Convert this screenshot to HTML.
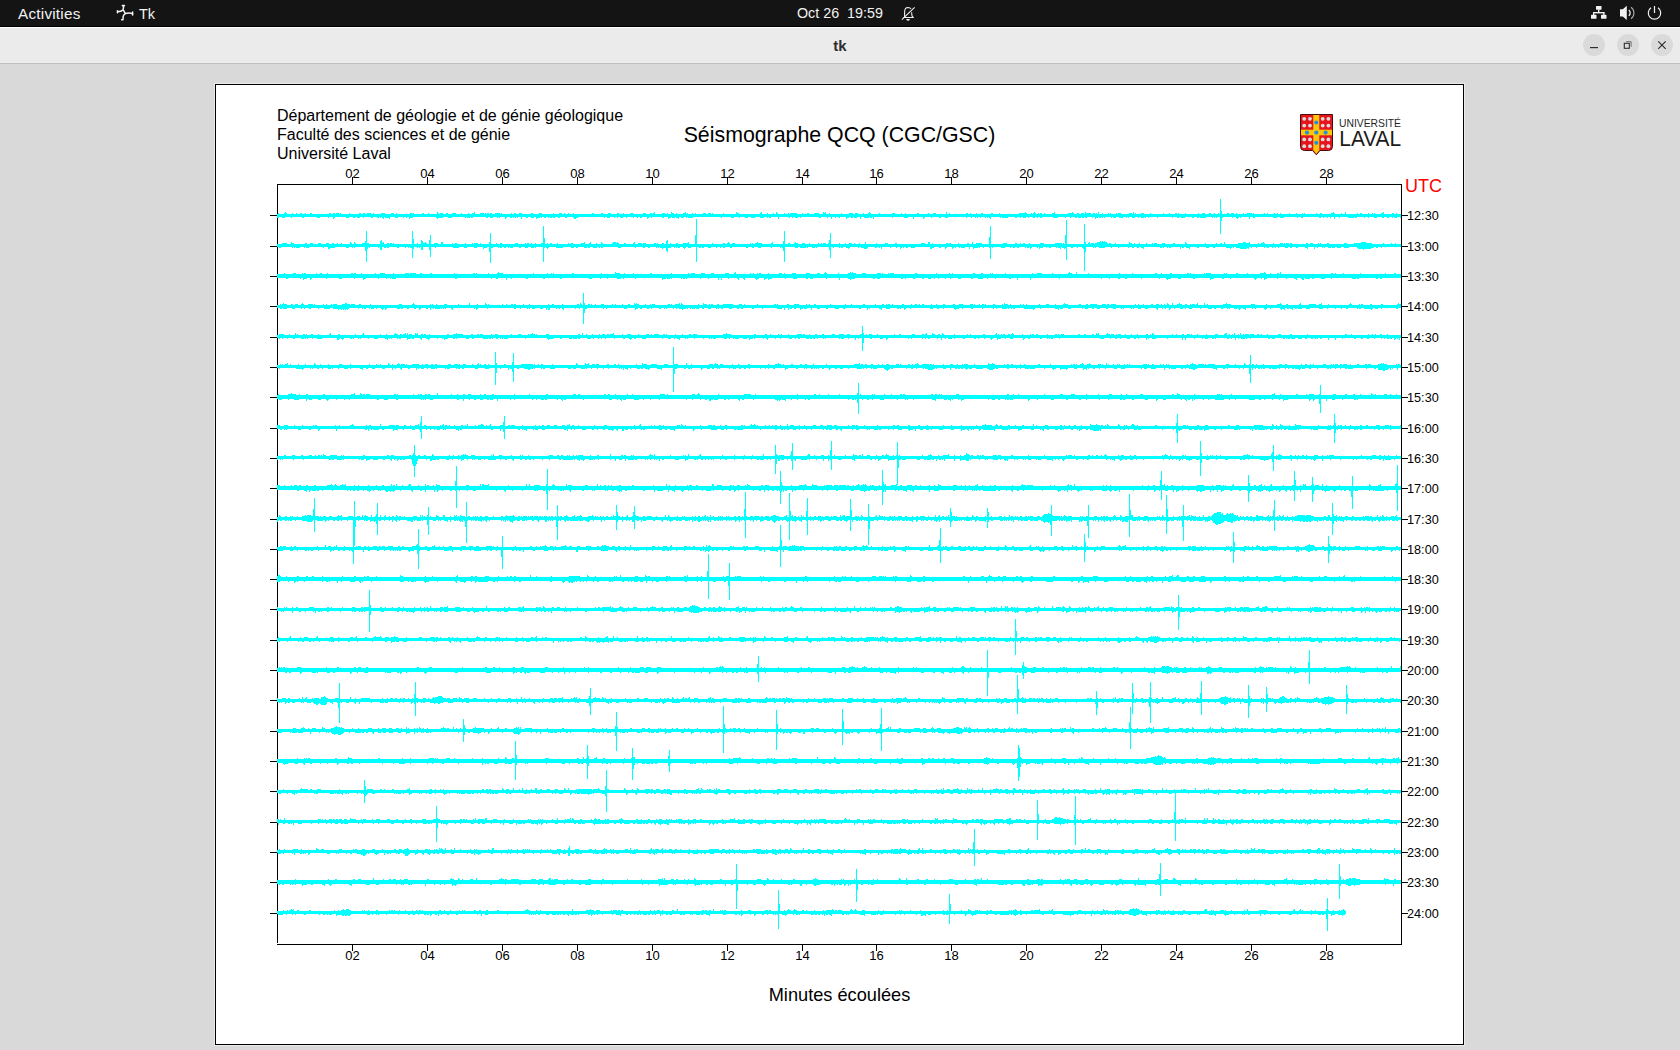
<!DOCTYPE html><html><head><meta charset='utf-8'><style>
*{margin:0;padding:0;box-sizing:border-box}
html,body{width:1680px;height:1050px;overflow:hidden;background:#d9d9d9}
svg{position:absolute;left:0;top:0}
</style></head><body>
<svg width='1680' height='1050' viewBox='0 0 1680 1050' font-family='Liberation Sans, sans-serif'>
<rect x='0' y='0' width='1680' height='26' fill='#141414'/>
<rect x='0' y='26' width='1680' height='1' fill='#000'/>
<rect x='0' y='27' width='1680' height='1' fill='#fff'/>
<rect x='0' y='28' width='1680' height='34' fill='#ebebeb'/>
<rect x='0' y='62' width='1680' height='1' fill='#efefef'/>
<rect x='0' y='63' width='1680' height='1' fill='#bebebe'/>
<text x='18' y='19.3' font-size='15.3' letter-spacing='0.22' fill='#f2f2f2'>Activities</text>
<text x='139' y='19' font-size='14.5' fill='#f2f2f2'>Tk</text>
<g stroke='#f2f2f2' fill='none' stroke-linecap='round' stroke-linejoin='round'><path d='M123.6 5.8L123.2 9.8Q121 11.6 117.6 11.8M123.2 9.8L125.4 13.6Q128 12.6 132.4 13.4M125.4 13.6Q123.4 14.8 123.2 16.4L123 19.8L121.6 19.8' stroke-width='1.5'/><path d='M117.5 10.8v2M132.6 12v3M122.4 5.6h2' stroke-width='1.6'/></g>
<text x='797' y='18' font-size='14.3' fill='#f2f2f2' xml:space='preserve'>Oct 26  19:59</text>
<path d='M904.6 16.2V12Q904.6 7.6 908 7.5Q910.2 7.5 911 9M911.6 12.2L912 15.8Q912.3 17.1 913.8 17.5H904.3Q904.6 17.2 904.6 16.2' stroke='#f0f0f0' stroke-width='1.1' fill='none'/><path d='M906.2 19.1H909.9A1.85 1.7 0 0 1 906.2 19.1z' fill='#f0f0f0'/><path d='M901.9 19.7L914.6 7.3' stroke='#f0f0f0' stroke-width='1.1'/>
<g fill='#f2f2f2'><rect x='1596' y='6' width='5.5' height='3.8' rx='.6'/><rect x='1591' y='14.8' width='5.5' height='4' rx='.6'/><rect x='1601' y='14.8' width='5.5' height='4' rx='.6'/><rect x='1598' y='9.5' width='1.4' height='3'/><rect x='1593' y='12' width='11.5' height='1.4'/><rect x='1593' y='12' width='1.3' height='3'/><rect x='1603.2' y='12' width='1.3' height='3'/></g>
<path d='M1620 9.3h2.8l4-3.6v14.3l-4-3.6h-2.8z' fill='#f2f2f2'/><path d='M1628.8 10a3.8 3.8 0 0 1 0 5.8' stroke='#f2f2f2' stroke-width='1.3' fill='none'/><path d='M1631 7.3a7 7 0 0 1 0 11.4' stroke='#aaa' stroke-width='1.1' fill='none'/>
<path d='M1651 7.8a6.2 6.2 0 1 0 7 0' stroke='#f2f2f2' stroke-width='1.2' fill='none'/><path d='M1654.5 6v7' stroke='#f2f2f2' stroke-width='1.2'/>
<text x='840' y='51' font-size='15' font-weight='bold' fill='#2e2e2e' text-anchor='middle'>tk</text>
<circle cx='1594' cy='45' r='11' fill='#dadada'/><circle cx='1628' cy='45' r='11' fill='#dadada'/><circle cx='1662' cy='45' r='11' fill='#dadada'/>
<path d='M1590 47.6h8' stroke='#2e2e2e' stroke-width='1.2'/>
<rect x='1624.3' y='43.3' width='5' height='5' stroke='#2e2e2e' stroke-width='1.1' fill='none'/><path d='M1626 41.7h5.1v5.1' stroke='#555' stroke-width='.8' fill='none'/>
<path d='M1658.2 41.3l7.5 7.5M1665.7 41.3l-7.5 7.5' stroke='#2e2e2e' stroke-width='1.2'/>
<rect x='214' y='83' width='1251' height='963' fill='#ececec'/>
<rect x='215' y='84' width='1249' height='961' fill='#000'/>
<rect x='216' y='85' width='1247' height='959' fill='#fff'/>
<path d='M277 184.5H1402M277 944.5H1402M277.5 184V943M1401.5 184V945M352.5 177V184M352.5 945V951M427.5 177V184M427.5 945V951M502.5 177V184M502.5 945V951M577.5 177V184M577.5 945V951M652.5 177V184M652.5 945V951M727.5 177V184M727.5 945V951M802.5 177V184M802.5 945V951M876.5 177V184M876.5 945V951M951.5 177V184M951.5 945V951M1026.5 177V184M1026.5 945V951M1101.5 177V184M1101.5 945V951M1176.5 177V184M1176.5 945V951M1251.5 177V184M1251.5 945V951M1326.5 177V184M1326.5 945V951M270 215.5H277M1402 215.5H1408M270 246.5H277M1402 246.5H1408M270 276.5H277M1402 276.5H1408M270 306.5H277M1402 306.5H1408M270 337.5H277M1402 337.5H1408M270 367.5H277M1402 367.5H1408M270 397.5H277M1402 397.5H1408M270 428.5H277M1402 428.5H1408M270 458.5H277M1402 458.5H1408M270 488.5H277M1402 488.5H1408M270 519.5H277M1402 519.5H1408M270 549.5H277M1402 549.5H1408M270 579.5H277M1402 579.5H1408M270 609.5H277M1402 609.5H1408M270 640.5H277M1402 640.5H1408M270 670.5H277M1402 670.5H1408M270 700.5H277M1402 700.5H1408M270 731.5H277M1402 731.5H1408M270 761.5H277M1402 761.5H1408M270 791.5H277M1402 791.5H1408M270 822.5H277M1402 822.5H1408M270 852.5H277M1402 852.5H1408M270 882.5H277M1402 882.5H1408M270 913.5H277M1402 913.5H1408' stroke='#000' stroke-width='1' fill='none' shape-rendering='crispEdges'/>
<text x='352.5' y='178' font-size='13' text-anchor='middle'>02</text>
<text x='352.5' y='960' font-size='13' text-anchor='middle'>02</text>
<text x='427.5' y='178' font-size='13' text-anchor='middle'>04</text>
<text x='427.5' y='960' font-size='13' text-anchor='middle'>04</text>
<text x='502.5' y='178' font-size='13' text-anchor='middle'>06</text>
<text x='502.5' y='960' font-size='13' text-anchor='middle'>06</text>
<text x='577.5' y='178' font-size='13' text-anchor='middle'>08</text>
<text x='577.5' y='960' font-size='13' text-anchor='middle'>08</text>
<text x='652.5' y='178' font-size='13' text-anchor='middle'>10</text>
<text x='652.5' y='960' font-size='13' text-anchor='middle'>10</text>
<text x='727.5' y='178' font-size='13' text-anchor='middle'>12</text>
<text x='727.5' y='960' font-size='13' text-anchor='middle'>12</text>
<text x='802.5' y='178' font-size='13' text-anchor='middle'>14</text>
<text x='802.5' y='960' font-size='13' text-anchor='middle'>14</text>
<text x='876.5' y='178' font-size='13' text-anchor='middle'>16</text>
<text x='876.5' y='960' font-size='13' text-anchor='middle'>16</text>
<text x='951.5' y='178' font-size='13' text-anchor='middle'>18</text>
<text x='951.5' y='960' font-size='13' text-anchor='middle'>18</text>
<text x='1026.5' y='178' font-size='13' text-anchor='middle'>20</text>
<text x='1026.5' y='960' font-size='13' text-anchor='middle'>20</text>
<text x='1101.5' y='178' font-size='13' text-anchor='middle'>22</text>
<text x='1101.5' y='960' font-size='13' text-anchor='middle'>22</text>
<text x='1176.5' y='178' font-size='13' text-anchor='middle'>24</text>
<text x='1176.5' y='960' font-size='13' text-anchor='middle'>24</text>
<text x='1251.5' y='178' font-size='13' text-anchor='middle'>26</text>
<text x='1251.5' y='960' font-size='13' text-anchor='middle'>26</text>
<text x='1326.5' y='178' font-size='13' text-anchor='middle'>28</text>
<text x='1326.5' y='960' font-size='13' text-anchor='middle'>28</text>
<text x='1407' y='220' font-size='12.7'>12:30</text>
<text x='1407' y='251' font-size='12.7'>13:00</text>
<text x='1407' y='281' font-size='12.7'>13:30</text>
<text x='1407' y='311' font-size='12.7'>14:00</text>
<text x='1407' y='342' font-size='12.7'>14:30</text>
<text x='1407' y='372' font-size='12.7'>15:00</text>
<text x='1407' y='402' font-size='12.7'>15:30</text>
<text x='1407' y='433' font-size='12.7'>16:00</text>
<text x='1407' y='463' font-size='12.7'>16:30</text>
<text x='1407' y='493' font-size='12.7'>17:00</text>
<text x='1407' y='524' font-size='12.7'>17:30</text>
<text x='1407' y='554' font-size='12.7'>18:00</text>
<text x='1407' y='584' font-size='12.7'>18:30</text>
<text x='1407' y='614' font-size='12.7'>19:00</text>
<text x='1407' y='645' font-size='12.7'>19:30</text>
<text x='1407' y='675' font-size='12.7'>20:00</text>
<text x='1407' y='705' font-size='12.7'>20:30</text>
<text x='1407' y='736' font-size='12.7'>21:00</text>
<text x='1407' y='766' font-size='12.7'>21:30</text>
<text x='1407' y='796' font-size='12.7'>22:00</text>
<text x='1407' y='827' font-size='12.7'>22:30</text>
<text x='1407' y='857' font-size='12.7'>23:00</text>
<text x='1407' y='887' font-size='12.7'>23:30</text>
<text x='1407' y='918' font-size='12.7'>24:00</text>
<text x='1405' y='192' font-size='18' fill='#f00'>UTC</text>
<text x='277' y='121' font-size='16'>Département de géologie et de génie géologique</text>
<text x='277' y='140' font-size='16'>Faculté des sciences et de génie</text>
<text x='277' y='159' font-size='16'>Université Laval</text>
<text x='839.5' y='142' font-size='21.33' text-anchor='middle'>Séismographe QCQ (CGC/GSC)</text>
<text x='839.5' y='1001' font-size='18.2' text-anchor='middle'>Minutes écoulées</text>
<path d='M1300.5 114.5h32v32q0 4-4 4h-8.5l-3.7 4.3l-3.7-4.3h-8.1q-4 0-4-4z' fill='#e6141c' stroke='#4a0d0d' stroke-width='1'/>
<rect x='1313.3' y='115' width='6' height='35.5' fill='#fdc80a'/><rect x='1301' y='129.7' width='31' height='5.6' fill='#fdc80a'/><path d='M1313.3 150h6l-3 4z' fill='#fdc80a'/>
<g fill='#2b8fd6'><circle cx='1316.3' cy='122.5' r='2.1'/><circle cx='1307' cy='132.6' r='2.1'/><circle cx='1316.3' cy='132.6' r='2.1'/><circle cx='1325.6' cy='132.6' r='2.1'/><circle cx='1316.3' cy='142.8' r='2.1'/></g>
<g fill='#dcdcdc'><circle cx='1304.2' cy='118.8' r='1.9'/><circle cx='1304.2' cy='125.6' r='1.9'/><circle cx='1304.2' cy='139.4' r='1.9'/><circle cx='1304.2' cy='146.2' r='1.9'/><circle cx='1310' cy='118.8' r='1.9'/><circle cx='1310' cy='125.6' r='1.9'/><circle cx='1310' cy='139.4' r='1.9'/><circle cx='1310' cy='146.2' r='1.9'/><circle cx='1322.7' cy='118.8' r='1.9'/><circle cx='1322.7' cy='125.6' r='1.9'/><circle cx='1322.7' cy='139.4' r='1.9'/><circle cx='1322.7' cy='146.2' r='1.9'/><circle cx='1328.4' cy='118.8' r='1.9'/><circle cx='1328.4' cy='125.6' r='1.9'/><circle cx='1328.4' cy='139.4' r='1.9'/><circle cx='1328.4' cy='146.2' r='1.9'/></g>
<text x='1339' y='126.8' font-size='10.6' textLength='62' lengthAdjust='spacingAndGlyphs' fill='#1f1f1f'>UNIVERSITÉ</text>
<text x='1339.3' y='146' font-size='21.8' textLength='61.8' lengthAdjust='spacingAndGlyphs' fill='#1a1a1a'>LAVAL</text>
<path d='M277 214h1124v3h-1124zM277 244h1124v3h-1124zM277 274h1124v4h-1124zM277 305h1124v3h-1124zM277 335h1124v3h-1124zM277 365h1124v3h-1124zM277 395h1124v4h-1124zM277 426h1124v3h-1124zM277 456h1124v3h-1124zM277 486h1124v4h-1124zM277 517h1124v3h-1124zM277 547h1124v3h-1124zM277 577h1124v4h-1124zM277 608h1124v3h-1124zM277 638h1124v3h-1124zM277 668h1124v4h-1124zM277 699h1124v3h-1124zM277 729h1124v3h-1124zM277 759h1124v4h-1124zM277 790h1124v3h-1124zM277 820h1124v3h-1124zM277 850h1124v3h-1124zM277 880h1124v4h-1124zM277 911h1069v3h-1069z' fill='#0ff' shape-rendering='crispEdges'/>
<path transform='translate(0 .5)' d='M285 212h1m151 0h1m36 0h1m179 0h1m16 0h1m13 0h1m50 0h1m24 0h1m14 0h1m46 0h1m1 0h1m43 0h1m76 0h1m78 0h1m8 0h1m19 0h1m17 0h1m12 0h1m12 0h1m34 0h1m199 0h1m11 0h1m37 0h1m-1106 1h1m5 0h3m5 0h1m3 0h1m3 0h2m3 0h1m4 0h2m17 0h2m2 0h2m1 0h3m1 0h1m8 0h1m9 0h2m2 0h2m2 0h4m2 0h1m7 0h4m6 0h3m2 0h1m13 0h2m1 0h1m8 0h2m4 0h1m8 0h2m1 0h3m3 0h2m4 0h4m5 0h1m6 0h1m3 0h3m5 0h4m1 0h1m1 0h2m1 0h2m3 0h5m1 0h1m9 0h1m2 0h2m3 0h3m9 0h2m6 0h3m11 0h1m5 0h3m2 0h1m3 0h1m4 0h1m18 0h2m7 0h2m5 0h3m6 0h2m4 0h1m6 0h3m10 0h3m4 0h2m1 0h2m7 0h3m2 0h1m3 0h3m2 0h1m6 0h3m1 0h1m4 0h1m2 0h1m7 0h3m2 0h3m1 0h1m10 0h1m12 0h3m21 0h2m5 0h1m5 0h1m2 0h2m6 0h1m3 0h1m1 0h7m5 0h1m4 0h2m5 0h5m4 0h3m3 0h1m11 0h1m7 0h4m2 0h3m5 0h1m4 0h3m8 0h1m12 0h3m6 0h1m3 0h1m11 0h2m9 0h1m4 0h3m10 0h1m2 0h1m16 0h2m2 0h1m5 0h1m4 0h2m8 0h2m6 0h1m19 0h8m4 0h1m1 0h3m2 0h1m1 0h2m2 0h1m7 0h3m13 0h6m3 0h2m2 0h3m1 0h6m2 0h2m1 0h1m1 0h1m3 0h1m5 0h1m1 0h1m5 0h1m1 0h3m8 0h3m1 0h1m1 0h1m5 0h3m6 0h1m12 0h1m5 0h1m5 0h2m1 0h1m6 0h1m12 0h1m3 0h3m4 0h2m3 0h1m3 0h1m8 0h2m2 0h3m2 0h1m6 0h1m3 0h5m1 0h1m10 0h1m2 0h1m6 0h1m2 0h1m2 0h1m8 0h1m6 0h1m5 0h1m1 0h1m11 0h1m3 0h2m9 0h4m6 0h1m3 0h1m11 0h1m2 0h2m6 0h1m3 0h1m1 0h1m6 0h3m8 0h2m2 0h1m-1120 4h2m3 0h3m6 0h1m10 0h2m13 0h3m8 0h1m4 0h2m11 0h3m4 0h2m2 0h3m3 0h1m7 0h2m4 0h2m1 0h1m1 0h2m1 0h5m5 0h3m5 0h1m2 0h1m2 0h4m23 0h7m5 0h4m13 0h1m1 0h3m1 0h2m13 0h2m2 0h3m4 0h1m1 0h1m5 0h2m3 0h2m1 0h1m1 0h1m1 0h1m3 0h1m4 0h2m3 0h3m2 0h4m1 0h1m2 0h2m2 0h1m1 0h2m1 0h2m3 0h2m5 0h2m6 0h5m26 0h1m2 0h3m4 0h1m2 0h1m2 0h3m3 0h1m6 0h1m3 0h1m2 0h2m5 0h2m2 0h1m10 0h2m4 0h3m1 0h3m1 0h3m2 0h3m2 0h1m1 0h5m28 0h1m9 0h3m5 0h1m5 0h3m3 0h4m5 0h4m3 0h1m1 0h2m7 0h1m10 0h1m2 0h1m2 0h3m2 0h1m18 0h2m6 0h1m3 0h1m3 0h1m3 0h1m6 0h3m2 0h2m1 0h3m3 0h1m3 0h5m1 0h2m1 0h1m18 0h1m11 0h4m5 0h1m9 0h2m6 0h1m7 0h2m4 0h3m18 0h1m4 0h1m3 0h1m1 0h1m2 0h1m4 0h1m1 0h1m1 0h2m9 0h1m1 0h6m7 0h2m3 0h1m2 0h3m2 0h1m4 0h2m2 0h1m2 0h2m11 0h5m7 0h1m4 0h1m4 0h2m1 0h3m1 0h2m1 0h2m5 0h1m2 0h3m1 0h2m1 0h1m1 0h1m6 0h1m1 0h3m3 0h4m3 0h1m1 0h1m3 0h3m3 0h1m2 0h3m1 0h1m2 0h1m8 0h1m14 0h1m4 0h2m2 0h4m7 0h2m3 0h2m1 0h6m6 0h1m1 0h1m1 0h1m5 0h1m9 0h1m3 0h3m1 0h1m8 0h1m3 0h2m18 0h4m3 0h4m13 0h1m3 0h2m16 0h2m2 0h1m3 0h1m2 0h1m3 0h1m4 0h1m8 0h6m1 0h2m7 0h1m3 0h1m5 0h3m5 0h2m3 0h2m3 0h1m1 0h3m3 0h1m-1068 1h1m49 0h1m5 0h1m19 0h1m27 0h1m67 0h1m15 0h1m14 0h1m37 0h2m71 0h1m20 0h1m9 0h1m99 0h1m52 0h1m14 0h1m13 0h1m12 0h1m39 0h1m9 0h1m66 0h1m104 0h1m141 0h1m11 0h1m84 0h1m-1044 24h1m58 0h1m3 0h1m28 0h1m41 0h1m15 0h2m141 0h1m5 0h1m10 0h1m11 0h3m1 0h1m16 0h1m53 0h1m39 0h1m28 0h1m14 0h1m22 0h1m69 0h1m62 0h2m42 0h1m116 0h1m39 0h1m55 0h1m38 0h1m24 0h1m13 0h1m-982 1h5m4 0h3m11 0h2m3 0h3m5 0h3m5 0h3m3 0h2m3 0h1m3 0h1m8 0h2m2 0h2m6 0h3m2 0h2m13 0h2m3 0h2m1 0h2m1 0h1m23 0h1m4 0h5m7 0h4m3 0h2m9 0h1m2 0h2m8 0h1m6 0h1m1 0h4m2 0h1m8 0h1m6 0h1m3 0h2m13 0h3m7 0h1m1 0h2m2 0h1m3 0h1m5 0h2m4 0h1m2 0h2m5 0h1m10 0h1m2 0h2m8 0h4m4 0h2m5 0h1m4 0h2m9 0h7m5 0h2m7 0h2m3 0h4m1 0h3m8 0h2m1 0h1m4 0h2m6 0h1m5 0h2m5 0h6m23 0h1m10 0h2m2 0h3m2 0h3m15 0h1m1 0h1m2 0h7m9 0h2m15 0h2m4 0h4m4 0h3m4 0h1m8 0h1m2 0h1m1 0h3m2 0h1m10 0h1m5 0h1m3 0h3m2 0h1m4 0h1m5 0h1m10 0h1m8 0h3m7 0h2m24 0h4m3 0h2m2 0h1m13 0h2m1 0h2m7 0h1m8 0h2m3 0h1m3 0h6m21 0h4m8 0h2m3 0h1m2 0h2m4 0h1m10 0h4m11 0h7m1 0h1m24 0h2m1 0h3m5 0h1m2 0h3m2 0h1m1 0h2m4 0h1m13 0h3m2 0h1m4 0h1m6 0h1m5 0h1m1 0h3m5 0h3m8 0h2m10 0h2m18 0h1m10 0h1m3 0h2m2 0h1m20 0h1m3 0h1m8 0h1m2 0h4m8 0h1m6 0h3m1 0h1m1 0h3m1 0h2m14 0h2m2 0h3m5 0h1m1 0h1m6 0h2m15 0h3m7 0h5m5 0h1m18 0h1m7 0h1m3 0h1m-1117 4h2m11 0h1m1 0h1m1 0h4m4 0h1m1 0h3m14 0h1m4 0h7m11 0h3m3 0h1m1 0h1m10 0h3m1 0h1m8 0h1m5 0h2m1 0h2m8 0h2m6 0h1m2 0h1m1 0h2m5 0h1m1 0h1m15 0h1m17 0h6m5 0h3m7 0h3m6 0h4m2 0h4m5 0h1m1 0h2m2 0h2m2 0h1m1 0h3m6 0h2m4 0h3m3 0h3m1 0h1m10 0h3m7 0h7m8 0h3m2 0h2m6 0h3m1 0h2m3 0h4m2 0h1m1 0h2m15 0h3m14 0h1m7 0h2m3 0h2m6 0h1m1 0h1m1 0h11m3 0h1m1 0h1m1 0h2m3 0h3m2 0h3m8 0h2m1 0h2m4 0h3m5 0h1m3 0h1m2 0h2m5 0h2m14 0h2m4 0h2m4 0h3m10 0h1m8 0h1m1 0h1m12 0h3m2 0h6m1 0h1m4 0h3m1 0h1m16 0h1m5 0h1m1 0h2m3 0h4m8 0h1m2 0h7m7 0h2m2 0h1m1 0h1m8 0h1m5 0h1m3 0h2m1 0h1m2 0h2m3 0h4m15 0h4m5 0h2m4 0h2m5 0h2m1 0h1m3 0h1m1 0h4m4 0h1m3 0h5m1 0h1m3 0h1m5 0h2m1 0h1m8 0h4m5 0h1m2 0h2m2 0h2m6 0h1m1 0h2m1 0h2m5 0h1m1 0h4m3 0h1m2 0h2m5 0h1m1 0h3m1 0h4m5 0h2m4 0h1m4 0h4m7 0h1m1 0h1m4 0h2m9 0h1m6 0h1m9 0h1m3 0h2m3 0h2m2 0h3m16 0h2m1 0h1m3 0h1m1 0h2m9 0h1m1 0h2m2 0h4m7 0h2m7 0h3m4 0h2m11 0h6m1 0h1m2 0h2m1 0h1m7 0h2m2 0h1m4 0h1m7 0h1m2 0h2m3 0h1m2 0h1m2 0h1m6 0h3m2 0h2m4 0h2m7 0h3m6 0h1m2 0h1m4 0h1m1 0h1m3 0h3m1 0h3m2 0h4m3 0h5m10 0h1m6 0h2m5 0h1m2 0h2m3 0h1m-1054 1h2m37 0h1m115 0h1m63 0h1m114 0h1m21 0h1m163 0h1m15 0h3m14 0h1m18 0h1m29 0h2m13 0h1m6 0h1m16 0h1m3 0h1m56 0h1m8 0h1m20 0h1m3 0h1m18 0h1m59 0h1m36 0h1m8 0h1m40 0h1m17 0h1m58 0h1m6 0h1m44 0h1m7 0h1m-870 24h1m116 0h1m119 0h1m89 0h1m26 0h1m216 0h1m6 0h1m187 0h1m15 0h1m-997 1h1m8 0h3m6 0h1m1 0h2m10 0h1m3 0h2m5 0h1m23 0h2m1 0h2m5 0h1m13 0h1m4 0h5m8 0h1m11 0h4m1 0h6m4 0h2m8 0h2m22 0h1m18 0h2m1 0h1m11 0h1m8 0h6m30 0h1m13 0h1m3 0h1m1 0h1m18 0h2m27 0h1m13 0h5m4 0h1m8 0h1m16 0h2m19 0h1m16 0h1m2 0h4m6 0h4m6 0h3m11 0h4m5 0h2m14 0h1m2 0h1m3 0h1m1 0h2m7 0h1m10 0h3m2 0h1m7 0h4m10 0h4m7 0h3m4 0h3m11 0h1m13 0h1m9 0h4m11 0h4m1 0h1m5 0h1m1 0h4m21 0h2m19 0h1m12 0h1m2 0h1m20 0h2m6 0h2m7 0h1m1 0h1m12 0h1m26 0h1m4 0h5m10 0h1m15 0h4m4 0h1m11 0h1m30 0h1m12 0h1m22 0h2m4 0h1m8 0h2m15 0h2m1 0h1m13 0h1m1 0h5m13 0h1m1 0h1m9 0h2m9 0h1m12 0h6m4 0h1m6 0h2m1 0h1m50 0h2m2 0h1m7 0h1m16 0h1m24 0h1m8 0h2m-1110 5h2m12 0h1m2 0h4m3 0h2m14 0h1m12 0h3m12 0h1m8 0h3m12 0h1m7 0h1m3 0h1m1 0h4m59 0h2m34 0h1m4 0h2m8 0h1m4 0h1m14 0h2m15 0h2m15 0h2m27 0h3m8 0h1m6 0h1m9 0h4m2 0h1m11 0h1m26 0h4m1 0h3m1 0h1m9 0h1m1 0h2m1 0h1m13 0h1m7 0h1m9 0h1m2 0h1m6 0h1m8 0h2m4 0h2m10 0h4m5 0h3m1 0h4m13 0h1m7 0h4m9 0h2m2 0h3m13 0h1m12 0h1m8 0h1m1 0h1m22 0h2m2 0h3m21 0h2m2 0h1m7 0h2m7 0h2m4 0h3m3 0h1m3 0h1m6 0h1m4 0h1m7 0h3m10 0h2m5 0h5m4 0h1m7 0h1m13 0h2m6 0h1m12 0h1m28 0h1m41 0h1m7 0h1m8 0h2m5 0h2m14 0h1m17 0h1m6 0h5m7 0h3m12 0h2m15 0h4m8 0h2m6 0h1m23 0h3m4 0h1m2 0h3m10 0h1m8 0h1m7 0h3m4 0h3m1 0h5m2 0h2m7 0h4m6 0h1m20 0h4m1 0h2m17 0h2m2 0h2m-1079 1h1m6 0h1m52 0h1m142 0h1m155 0h1m55 0h1m2 0h1m16 0h1m5 0h1m11 0h1m7 0h1m3 0h1m70 0h1m177 0h1m12 0h1m136 0h1m42 0h1m44 0h1m8 0h1m31 0h1m5 0h2m-1021 24h1m18 0h1m110 0h1m55 0h1m15 0h1m94 0h1m53 0h1m1 0h1m42 0h1m1 0h1m21 0h1m300 0h1m59 0h1m102 0h1m4 0h1m6 0h1m17 0h1m6 0h1m21 0h1m53 0h1m19 0h1m20 0h1m28 0h1m47 0h1m-1119 1h1m1 0h5m4 0h2m2 0h3m3 0h3m4 0h5m1 0h1m8 0h1m2 0h1m4 0h1m1 0h4m8 0h1m2 0h1m2 0h4m4 0h2m9 0h1m28 0h3m10 0h3m15 0h1m1 0h1m3 0h1m7 0h3m11 0h1m10 0h1m7 0h1m7 0h2m1 0h1m13 0h1m3 0h1m4 0h2m1 0h2m7 0h1m5 0h1m18 0h1m3 0h2m8 0h1m14 0h2m1 0h2m6 0h2m1 0h1m3 0h1m5 0h3m8 0h1m2 0h1m6 0h1m5 0h2m4 0h5m6 0h1m4 0h1m1 0h3m13 0h2m1 0h1m3 0h5m1 0h2m15 0h1m4 0h4m2 0h1m1 0h2m4 0h2m4 0h7m9 0h3m2 0h1m12 0h1m16 0h2m1 0h1m9 0h2m5 0h5m7 0h1m2 0h1m4 0h2m14 0h1m14 0h1m5 0h1m11 0h2m10 0h1m6 0h2m2 0h1m1 0h2m2 0h1m9 0h2m7 0h1m3 0h2m2 0h1m2 0h2m7 0h1m4 0h1m6 0h2m8 0h2m4 0h4m7 0h3m1 0h1m4 0h1m2 0h2m1 0h1m7 0h2m7 0h1m1 0h4m2 0h1m9 0h1m2 0h1m2 0h1m12 0h1m6 0h3m6 0h1m7 0h5m11 0h2m5 0h2m2 0h7m5 0h4m1 0h2m2 0h5m19 0h1m2 0h1m4 0h1m7 0h2m3 0h3m2 0h1m2 0h1m2 0h2m3 0h1m4 0h5m3 0h2m3 0h1m1 0h3m1 0h2m6 0h1m2 0h1m15 0h8m20 0h4m11 0h1m10 0h5m4 0h2m11 0h2m8 0h7m3 0h3m6 0h1m20 0h3m7 0h1m1 0h2m7 0h2m9 0h2m14 0h4m-1121 4h2m1 0h4m5 0h3m6 0h1m2 0h1m4 0h2m7 0h1m5 0h6m3 0h12m3 0h1m9 0h1m3 0h1m1 0h2m3 0h1m1 0h3m2 0h1m4 0h3m1 0h2m10 0h3m1 0h2m4 0h2m5 0h2m3 0h2m5 0h2m2 0h1m2 0h1m1 0h5m1 0h1m1 0h1m1 0h1m5 0h2m21 0h1m1 0h2m9 0h1m26 0h2m4 0h1m6 0h1m1 0h1m2 0h3m5 0h3m3 0h1m1 0h2m6 0h1m2 0h1m2 0h2m11 0h1m3 0h1m4 0h3m16 0h1m2 0h1m17 0h3m8 0h3m2 0h2m5 0h2m2 0h1m7 0h2m3 0h1m1 0h1m6 0h1m2 0h1m2 0h7m1 0h1m2 0h1m1 0h3m1 0h3m3 0h2m4 0h3m5 0h1m1 0h1m2 0h2m7 0h2m5 0h2m2 0h2m9 0h2m8 0h1m14 0h5m2 0h1m3 0h1m1 0h2m2 0h2m4 0h3m1 0h3m4 0h1m5 0h3m6 0h2m7 0h4m4 0h2m14 0h2m6 0h1m1 0h1m9 0h3m4 0h4m7 0h2m1 0h1m3 0h2m4 0h1m19 0h3m4 0h2m4 0h1m10 0h5m3 0h1m8 0h2m9 0h1m10 0h1m2 0h1m5 0h5m1 0h1m2 0h1m1 0h2m9 0h11m5 0h1m14 0h4m1 0h3m5 0h3m11 0h1m2 0h3m4 0h2m3 0h3m6 0h2m5 0h3m5 0h1m1 0h1m7 0h1m1 0h1m4 0h3m4 0h3m8 0h2m4 0h1m2 0h1m3 0h2m3 0h1m5 0h3m2 0h1m3 0h3m8 0h1m7 0h4m2 0h2m5 0h2m4 0h1m1 0h1m4 0h3m1 0h3m2 0h3m6 0h1m2 0h1m8 0h3m3 0h1m9 0h5m2 0h2m1 0h3m2 0h2m1 0h4m4 0h4m9 0h4m4 0h1m7 0h1m5 0h1m4 0h2m9 0h1m1 0h2m3 0h9m2 0h3m3 0h1m14 0h2m-1060 1h1m2 0h1m40 0h1m2 0h1m33 0h1m10 0h1m21 0h1m23 0h1m69 0h1m1 0h2m13 0h1m71 0h1m46 0h1m101 0h1m3 0h1m11 0h1m10 0h1m55 0h1m13 0h1m22 0h1m50 0h1m77 0h1m24 0h1m98 0h1m11 0h1m69 0h1m5 0h1m19 0h1m15 0h1m2 0h1m7 0h1m78 0h1m-1077 24h1m34 0h1m32 0h1m31 0h1m9 0h1m1 0h1m7 0h1m1 0h1m38 0h1m75 0h1m49 0h1m30 0h1m312 0h1m5 0h1m9 0h1m53 0h1m15 0h1m83 0h1m1 0h1m8 0h1m44 0h1m72 0h2m7 0h1m5 0h1m-962 1h5m5 0h1m5 0h1m1 0h1m5 0h2m1 0h1m4 0h2m5 0h1m10 0h2m7 0h2m15 0h1m6 0h2m16 0h1m5 0h1m7 0h4m2 0h2m1 0h3m1 0h1m1 0h3m3 0h3m3 0h2m1 0h2m3 0h1m17 0h2m4 0h10m8 0h2m4 0h2m1 0h3m8 0h1m3 0h3m13 0h1m6 0h3m7 0h1m1 0h5m1 0h1m9 0h3m29 0h2m2 0h1m3 0h1m5 0h1m6 0h1m2 0h3m2 0h2m1 0h4m8 0h1m4 0h4m7 0h1m7 0h3m2 0h1m2 0h5m4 0h2m1 0h1m8 0h1m6 0h1m6 0h2m2 0h4m26 0h2m2 0h2m25 0h2m9 0h2m3 0h1m7 0h1m2 0h1m6 0h1m8 0h5m1 0h2m4 0h1m5 0h2m5 0h2m8 0h3m4 0h5m3 0h3m10 0h2m4 0h1m2 0h3m5 0h1m16 0h1m4 0h2m11 0h3m7 0h2m1 0h2m5 0h3m3 0h2m2 0h2m10 0h1m12 0h1m2 0h1m12 0h2m10 0h2m1 0h1m2 0h1m1 0h2m3 0h2m1 0h3m8 0h1m7 0h1m1 0h2m2 0h2m9 0h1m7 0h2m1 0h1m2 0h3m14 0h2m4 0h2m6 0h2m2 0h3m7 0h4m1 0h3m2 0h1m1 0h3m4 0h1m5 0h1m5 0h1m8 0h2m2 0h1m1 0h2m18 0h1m3 0h1m5 0h2m3 0h3m1 0h1m5 0h1m8 0h1m8 0h3m6 0h3m2 0h1m2 0h1m1 0h1m3 0h1m1 0h1m2 0h1m1 0h4m1 0h4m3 0h2m2 0h1m5 0h1m10 0h3m9 0h2m15 0h1m37 0h2m4 0h1m16 0h1m3 0h1m2 0h1m4 0h2m5 0h1m-1109 4h1m2 0h1m4 0h1m5 0h2m6 0h3m1 0h1m1 0h1m4 0h1m4 0h5m15 0h3m1 0h3m6 0h2m1 0h1m4 0h1m1 0h1m7 0h1m5 0h4m7 0h3m1 0h1m1 0h1m5 0h1m1 0h2m6 0h4m1 0h2m6 0h2m4 0h4m7 0h1m4 0h1m1 0h4m5 0h2m1 0h1m9 0h3m3 0h2m9 0h5m1 0h2m1 0h1m3 0h2m2 0h1m1 0h1m1 0h4m17 0h1m21 0h7m6 0h2m7 0h3m1 0h4m1 0h2m7 0h4m2 0h1m4 0h1m2 0h1m3 0h1m8 0h1m8 0h2m4 0h3m2 0h2m6 0h4m16 0h1m5 0h3m3 0h1m2 0h3m5 0h1m1 0h1m6 0h1m8 0h1m5 0h1m1 0h1m1 0h3m17 0h1m1 0h4m4 0h4m2 0h4m1 0h1m8 0h1m2 0h2m7 0h1m4 0h1m8 0h3m3 0h1m2 0h2m6 0h3m1 0h2m1 0h2m2 0h1m5 0h1m1 0h1m13 0h1m1 0h3m4 0h1m6 0h1m2 0h1m11 0h2m8 0h3m3 0h2m20 0h1m2 0h1m10 0h1m2 0h1m2 0h2m7 0h1m3 0h1m3 0h1m2 0h4m2 0h1m8 0h2m9 0h2m2 0h1m5 0h1m5 0h3m4 0h4m4 0h1m4 0h3m10 0h2m3 0h2m10 0h2m5 0h1m1 0h1m1 0h2m6 0h1m40 0h4m6 0h1m4 0h2m3 0h1m6 0h3m4 0h2m2 0h1m7 0h1m1 0h1m3 0h4m11 0h1m14 0h1m2 0h1m8 0h1m7 0h1m2 0h3m4 0h2m1 0h1m11 0h2m2 0h1m3 0h1m2 0h1m2 0h4m1 0h1m3 0h1m17 0h2m2 0h3m8 0h2m1 0h1m1 0h2m1 0h4m3 0h4m3 0h2m4 0h2m2 0h1m1 0h1m2 0h2m6 0h1m6 0h1m6 0h1m11 0h2m5 0h2m4 0h2m5 0h1m6 0h1m2 0h1m2 0h2m1 0h2m2 0h2m1 0h1m1 0h1m-1063 1h2m3 0h1m44 0h1m19 0h1m13 0h1m6 0h1m15 0h1m103 0h1m81 0h1m48 0h1m69 0h1m17 0h1m87 0h1m30 0h1m54 0h1m49 0h1m5 0h1m25 0h1m122 0h1m35 0h1m2 0h1m49 0h1m92 0h1m6 0h1m58 0h1m4 0h1m-1113 24h1m26 0h1m73 0h1m9 0h1m79 0h1m97 0h1m8 0h1m2 0h1m53 0h1m43 0h1m28 0h1m62 0h1m80 0h1m57 0h1m70 0h1m93 0h1m6 0h1m16 0h1m137 0h1m136 0h1m-1102 1h1m1 0h1m2 0h3m2 0h1m7 0h1m6 0h1m8 0h2m4 0h1m7 0h1m10 0h3m8 0h1m18 0h1m6 0h1m3 0h1m7 0h2m2 0h1m4 0h3m1 0h4m1 0h1m5 0h7m3 0h1m2 0h3m3 0h2m2 0h2m11 0h3m3 0h4m1 0h1m3 0h3m6 0h1m4 0h2m1 0h1m3 0h2m2 0h1m15 0h2m15 0h5m2 0h1m2 0h2m1 0h1m3 0h1m2 0h2m9 0h1m23 0h2m7 0h4m3 0h3m1 0h3m8 0h2m5 0h2m2 0h1m17 0h1m5 0h5m4 0h6m7 0h4m7 0h3m8 0h1m4 0h1m17 0h4m1 0h4m2 0h3m9 0h1m5 0h1m9 0h2m18 0h1m6 0h6m2 0h1m7 0h2m7 0h2m3 0h2m6 0h1m12 0h1m27 0h6m1 0h2m2 0h2m4 0h2m5 0h1m3 0h1m4 0h1m8 0h3m1 0h1m7 0h2m2 0h1m2 0h4m3 0h6m15 0h1m6 0h3m4 0h1m4 0h1m1 0h4m6 0h1m13 0h3m2 0h1m10 0h1m2 0h2m2 0h2m7 0h1m3 0h1m13 0h2m10 0h1m20 0h1m1 0h2m1 0h1m3 0h4m3 0h4m7 0h3m1 0h1m3 0h1m1 0h1m4 0h1m3 0h1m1 0h1m4 0h1m2 0h1m1 0h1m13 0h4m1 0h1m3 0h2m6 0h1m2 0h1m2 0h1m1 0h1m18 0h1m7 0h1m2 0h6m1 0h1m2 0h7m11 0h3m6 0h1m8 0h2m6 0h2m2 0h1m6 0h1m15 0h3m3 0h2m14 0h1m3 0h2m3 0h1m2 0h1m9 0h3m5 0h1m1 0h1m1 0h3m2 0h2m1 0h4m3 0h1m6 0h2m6 0h2m1 0h3m7 0h4m2 0h3m9 0h1m1 0h2m-1121 4h1m16 0h8m6 0h1m1 0h1m4 0h2m3 0h1m5 0h3m1 0h1m5 0h1m5 0h4m2 0h1m9 0h3m3 0h2m4 0h3m7 0h3m7 0h1m2 0h1m4 0h2m6 0h2m6 0h1m1 0h1m2 0h3m3 0h1m3 0h4m1 0h1m8 0h1m1 0h3m6 0h1m1 0h2m2 0h2m11 0h3m7 0h4m11 0h1m7 0h1m1 0h2m5 0h2m11 0h1m1 0h1m1 0h1m6 0h1m1 0h2m5 0h5m13 0h3m2 0h3m5 0h4m1 0h1m4 0h1m5 0h1m5 0h1m4 0h1m10 0h1m1 0h1m1 0h1m1 0h3m2 0h1m6 0h3m1 0h2m2 0h5m7 0h5m12 0h3m7 0h2m2 0h2m1 0h1m9 0h2m4 0h3m2 0h2m3 0h1m1 0h1m9 0h1m3 0h3m3 0h2m3 0h2m3 0h1m10 0h1m4 0h1m2 0h1m4 0h2m10 0h3m8 0h2m6 0h1m1 0h1m4 0h2m1 0h1m1 0h1m1 0h1m3 0h2m5 0h2m4 0h2m3 0h3m5 0h1m8 0h5m1 0h1m2 0h1m4 0h1m1 0h4m7 0h1m6 0h2m13 0h1m4 0h2m3 0h1m6 0h1m1 0h9m2 0h1m6 0h3m4 0h1m4 0h2m1 0h2m1 0h2m2 0h3m1 0h3m4 0h7m4 0h3m3 0h1m2 0h2m9 0h2m7 0h1m3 0h1m4 0h4m1 0h5m9 0h1m7 0h4m4 0h8m6 0h3m6 0h4m1 0h1m4 0h2m4 0h1m5 0h1m8 0h3m4 0h4m16 0h1m2 0h3m4 0h5m8 0h1m4 0h1m1 0h5m5 0h2m2 0h1m3 0h2m3 0h3m16 0h4m6 0h2m2 0h1m11 0h1m3 0h1m5 0h2m1 0h1m2 0h1m2 0h2m1 0h1m1 0h2m4 0h2m1 0h5m2 0h1m5 0h1m2 0h1m3 0h2m1 0h6m1 0h3m4 0h2m6 0h1m9 0h2m1 0h1m4 0h1m4 0h1m4 0h2m1 0h5m13 0h1m7 0h2m10 0h3m1 0h1m1 0h1m4 0h1m-1096 1h1m59 0h1m29 0h1m8 0h1m14 0h1m91 0h1m114 0h1m3 0h1m20 0h1m12 0h1m12 0h1m26 0h1m83 0h1m43 0h1m98 0h1m21 0h1m15 0h1m86 0h1m6 0h1m5 0h1m16 0h1m2 0h1m77 0h1m51 0h1m35 0h1m46 0h1m86 0h1m3 0h1m6 0h1m-1107 24h1m62 0h1m5 0h1m76 0h1m260 0h1m478 0h1m96 0h1m96 0h1m-1094 1h1m9 0h8m3 0h1m6 0h2m15 0h2m26 0h4m5 0h2m1 0h2m1 0h4m24 0h2m1 0h1m15 0h1m4 0h1m1 0h2m3 0h2m1 0h2m7 0h1m13 0h1m5 0h1m5 0h2m3 0h3m9 0h1m3 0h2m6 0h2m20 0h1m14 0h1m16 0h2m25 0h3m2 0h2m24 0h2m2 0h2m5 0h1m11 0h1m4 0h1m27 0h5m2 0h1m24 0h3m2 0h3m18 0h1m25 0h7m4 0h1m41 0h1m16 0h2m3 0h1m8 0h1m10 0h1m20 0h1m11 0h1m1 0h1m9 0h1m6 0h1m8 0h2m1 0h2m26 0h2m2 0h2m2 0h1m1 0h1m14 0h3m48 0h2m4 0h1m4 0h1m25 0h1m15 0h3m8 0h4m11 0h1m11 0h1m10 0h3m9 0h1m4 0h1m13 0h3m29 0h2m3 0h3m14 0h1m36 0h1m40 0h3m5 0h1m15 0h2m8 0h1m2 0h5m19 0h3m9 0h2m6 0h2m5 0h1m10 0h2m2 0h1m8 0h3m3 0h1m5 0h1m-1118 5h3m6 0h1m5 0h5m7 0h1m2 0h3m6 0h3m5 0h3m7 0h1m7 0h1m4 0h1m27 0h2m5 0h4m8 0h2m23 0h1m1 0h1m1 0h1m4 0h3m24 0h2m4 0h1m5 0h1m4 0h2m4 0h3m4 0h2m1 0h3m4 0h1m12 0h1m3 0h1m17 0h1m3 0h1m4 0h3m1 0h2m10 0h1m3 0h2m1 0h2m17 0h1m25 0h3m5 0h1m2 0h2m1 0h3m8 0h5m4 0h1m6 0h1m8 0h1m26 0h1m5 0h1m7 0h1m4 0h2m2 0h4m1 0h4m6 0h2m2 0h1m9 0h2m2 0h2m9 0h1m21 0h6m1 0h4m5 0h1m5 0h1m7 0h1m2 0h2m38 0h1m3 0h2m1 0h1m6 0h1m4 0h2m3 0h1m7 0h4m13 0h1m7 0h1m1 0h1m5 0h1m18 0h4m8 0h3m1 0h3m1 0h1m5 0h1m2 0h3m24 0h1m3 0h3m3 0h2m5 0h1m1 0h2m1 0h3m15 0h2m7 0h1m13 0h3m12 0h2m11 0h2m5 0h1m12 0h1m8 0h1m11 0h2m1 0h2m7 0h2m11 0h3m8 0h2m5 0h3m15 0h1m3 0h2m1 0h2m2 0h1m1 0h1m8 0h1m4 0h1m20 0h1m5 0h1m13 0h6m4 0h2m3 0h1m7 0h1m6 0h1m3 0h5m21 0h2m2 0h2m11 0h1m5 0h3m7 0h1m11 0h2m1 0h1m-1052 1h1m20 0h1m135 0h1m33 0h1m64 0h1m58 0h1m87 0h2m28 0h1m37 0h1m1 0h1m5 0h1m149 0h1m14 0h1m10 0h1m66 0h1m127 0h1m29 0h1m5 0h1m90 0h1m25 0h1m3 0h1m12 0h1m-975 24h1m27 0h1m37 0h1m24 0h1m23 0h1m13 0h2m7 0h1m78 0h1m70 0h1m40 0h1m69 0h1m2 0h1m32 0h1m208 0h1m36 0h1m56 0h1m16 0h1m10 0h1m13 0h2m138 0h1m7 0h1m14 0h1m-1019 1h3m4 0h4m6 0h1m7 0h1m10 0h1m1 0h2m18 0h1m3 0h1m10 0h4m12 0h1m2 0h2m9 0h1m8 0h6m1 0h3m5 0h2m4 0h1m4 0h4m1 0h1m3 0h2m14 0h1m1 0h2m1 0h2m2 0h1m4 0h1m6 0h2m2 0h1m1 0h1m7 0h1m2 0h6m2 0h1m2 0h2m9 0h3m5 0h2m1 0h4m7 0h1m12 0h1m3 0h1m2 0h2m3 0h3m4 0h3m5 0h3m2 0h3m2 0h2m4 0h1m15 0h1m9 0h3m27 0h1m4 0h2m10 0h1m2 0h1m4 0h2m2 0h1m13 0h3m1 0h2m2 0h1m14 0h1m7 0h4m1 0h2m5 0h1m4 0h2m14 0h2m1 0h1m5 0h6m1 0h1m7 0h1m3 0h1m2 0h1m2 0h2m3 0h1m6 0h1m2 0h4m5 0h1m4 0h1m8 0h3m4 0h3m4 0h5m2 0h3m11 0h1m3 0h3m1 0h2m6 0h1m12 0h1m15 0h2m2 0h2m9 0h2m8 0h2m7 0h1m15 0h1m7 0h1m9 0h1m14 0h1m11 0h1m6 0h3m2 0h2m6 0h2m5 0h1m6 0h2m9 0h1m2 0h1m8 0h3m12 0h2m2 0h1m4 0h1m4 0h2m5 0h1m8 0h1m7 0h1m2 0h2m2 0h1m1 0h2m9 0h2m4 0h1m1 0h1m4 0h4m2 0h1m17 0h2m26 0h3m1 0h1m9 0h2m6 0h3m20 0h2m6 0h3m15 0h9m9 0h2m2 0h1m3 0h3m6 0h1m5 0h6m17 0h1m9 0h1m1 0h1m2 0h2m3 0h1m1 0h2m3 0h1m4 0h1m9 0h2m4 0h2m8 0h4m5 0h4m1 0h1m9 0h1m-1121 4h2m2 0h1m1 0h1m11 0h3m8 0h2m7 0h2m16 0h1m28 0h2m1 0h1m2 0h1m1 0h6m3 0h2m9 0h5m5 0h1m8 0h3m4 0h3m4 0h1m3 0h1m3 0h1m2 0h3m3 0h1m1 0h1m10 0h3m1 0h2m29 0h2m7 0h1m17 0h2m2 0h1m1 0h3m6 0h1m1 0h3m4 0h3m19 0h2m1 0h1m3 0h1m2 0h1m7 0h4m6 0h2m3 0h1m5 0h2m3 0h6m2 0h2m4 0h2m1 0h3m3 0h1m3 0h1m5 0h1m1 0h2m14 0h3m3 0h2m3 0h5m18 0h2m6 0h1m9 0h6m4 0h3m2 0h1m7 0h2m1 0h6m17 0h1m14 0h2m4 0h2m1 0h1m2 0h2m4 0h3m3 0h1m6 0h1m4 0h1m11 0h1m2 0h2m1 0h3m4 0h2m2 0h2m10 0h1m3 0h3m8 0h1m1 0h1m4 0h4m1 0h2m7 0h1m4 0h1m4 0h4m6 0h5m2 0h1m4 0h3m3 0h3m2 0h1m7 0h4m8 0h3m7 0h4m2 0h2m2 0h1m1 0h1m5 0h2m2 0h1m8 0h3m7 0h6m1 0h1m8 0h4m9 0h3m6 0h1m1 0h2m3 0h2m6 0h3m2 0h2m1 0h1m7 0h2m4 0h1m1 0h3m4 0h2m3 0h1m2 0h2m3 0h2m19 0h1m2 0h2m3 0h1m5 0h3m1 0h3m21 0h1m10 0h1m3 0h5m7 0h3m2 0h4m1 0h4m1 0h5m5 0h2m5 0h1m12 0h4m1 0h1m10 0h1m1 0h1m2 0h2m1 0h7m1 0h1m3 0h3m3 0h1m1 0h1m2 0h1m2 0h2m2 0h9m1 0h1m12 0h1m1 0h5m9 0h4m3 0h1m2 0h1m3 0h1m7 0h1m4 0h2m1 0h1m2 0h2m12 0h1m3 0h2m3 0h1m6 0h1m-1073 1h1m17 0h1m31 0h1m24 0h1m64 0h1m41 0h1m25 0h1m40 0h1m44 0h1m4 0h1m4 0h2m50 0h1m18 0h1m147 0h1m67 0h1m5 0h1m45 0h1m6 0h1m10 0h1m14 0h1m23 0h1m24 0h1m35 0h1m15 0h1m4 0h1m78 0h1m24 0h1m47 0h1m-930 24h1m108 0h1m30 0h1m1 0h1m27 0h1m116 0h1m39 0h1m3 0h1m33 0h1m11 0h1m62 0h1m11 0h1m32 0h2m43 0h1m8 0h1m23 0h1m43 0h1m17 0h1m19 0h1m136 0h1m59 0h1m81 0h1m23 0h1m7 0h1m-996 1h2m6 0h3m6 0h2m6 0h3m3 0h1m2 0h2m1 0h1m1 0h3m4 0h7m4 0h1m1 0h1m19 0h2m22 0h2m2 0h3m15 0h2m4 0h1m2 0h2m4 0h2m6 0h2m15 0h1m3 0h1m4 0h1m2 0h7m3 0h4m16 0h1m1 0h1m5 0h3m9 0h1m8 0h1m1 0h1m5 0h1m20 0h4m4 0h2m2 0h2m4 0h1m1 0h1m3 0h1m2 0h1m1 0h5m7 0h1m6 0h2m11 0h1m10 0h2m1 0h2m5 0h1m1 0h1m15 0h4m1 0h1m15 0h1m12 0h1m1 0h1m2 0h1m10 0h2m21 0h1m11 0h1m9 0h1m7 0h1m10 0h1m11 0h3m1 0h5m6 0h2m15 0h3m4 0h1m6 0h3m4 0h1m5 0h1m10 0h1m7 0h4m2 0h2m1 0h1m4 0h3m6 0h1m5 0h2m1 0h4m4 0h1m2 0h1m2 0h1m22 0h1m5 0h4m6 0h1m4 0h6m5 0h1m5 0h1m3 0h5m2 0h2m4 0h2m1 0h1m1 0h2m9 0h4m1 0h3m10 0h2m15 0h1m15 0h1m21 0h1m1 0h4m2 0h1m13 0h2m2 0h1m3 0h2m3 0h1m2 0h3m11 0h1m2 0h3m6 0h1m3 0h2m26 0h1m1 0h4m2 0h1m11 0h2m1 0h1m21 0h1m2 0h1m1 0h1m3 0h1m3 0h1m22 0h7m2 0h1m18 0h1m4 0h1m1 0h4m8 0h2m3 0h1m2 0h1m3 0h2m2 0h1m7 0h4m4 0h1m4 0h1m1 0h5m27 0h1m10 0h4m3 0h2m3 0h1m3 0h1m7 0h1m-1120 4h1m2 0h1m1 0h1m10 0h1m9 0h1m25 0h2m1 0h2m3 0h5m1 0h1m15 0h1m1 0h3m2 0h4m3 0h5m5 0h2m5 0h2m2 0h1m2 0h2m1 0h2m1 0h2m6 0h2m4 0h1m8 0h1m3 0h6m1 0h2m7 0h3m3 0h1m5 0h1m2 0h3m3 0h1m4 0h1m1 0h1m3 0h3m3 0h1m3 0h8m4 0h1m4 0h2m5 0h2m6 0h2m3 0h2m2 0h2m2 0h1m8 0h1m6 0h1m9 0h2m2 0h10m1 0h1m2 0h3m1 0h4m4 0h4m1 0h1m3 0h1m11 0h1m4 0h1m3 0h3m3 0h1m2 0h6m1 0h2m8 0h1m1 0h1m2 0h1m3 0h1m1 0h1m2 0h1m2 0h2m11 0h4m6 0h3m6 0h2m1 0h1m3 0h2m2 0h1m2 0h1m2 0h1m1 0h1m6 0h1m4 0h2m7 0h1m8 0h1m7 0h1m5 0h2m1 0h4m3 0h1m2 0h1m7 0h2m1 0h3m3 0h1m6 0h2m5 0h6m2 0h1m6 0h1m6 0h1m4 0h1m1 0h2m6 0h3m11 0h3m15 0h2m3 0h1m2 0h3m7 0h7m3 0h3m1 0h4m11 0h3m4 0h2m1 0h4m1 0h2m2 0h1m2 0h2m1 0h1m1 0h1m9 0h1m5 0h6m4 0h1m8 0h1m5 0h1m1 0h1m5 0h5m2 0h1m3 0h4m6 0h1m2 0h1m5 0h1m1 0h1m2 0h3m5 0h1m1 0h3m6 0h6m2 0h1m2 0h1m3 0h3m11 0h2m5 0h1m3 0h2m17 0h1m3 0h1m1 0h3m4 0h4m2 0h2m3 0h3m3 0h1m6 0h1m19 0h1m5 0h1m2 0h1m3 0h1m2 0h2m1 0h1m3 0h6m4 0h3m7 0h3m7 0h1m8 0h3m12 0h2m1 0h2m3 0h1m11 0h9m7 0h1m1 0h3m10 0h1m5 0h1m8 0h1m4 0h1m1 0h3m6 0h1m7 0h1m9 0h1m12 0h1m2 0h1m10 0h1m2 0h2m7 0h2m2 0h1m1 0h6m3 0h1m-1029 1h1m24 0h1m5 0h1m19 0h1m12 0h2m29 0h1m51 0h1m65 0h1m3 0h1m31 0h1m9 0h1m33 0h1m25 0h1m92 0h2m15 0h1m27 0h1m4 0h1m25 0h1m23 0h1m9 0h1m47 0h1m7 0h1m9 0h1m5 0h1m44 0h1m1 0h1m44 0h1m10 0h1m50 0h1m5 0h1m58 0h1m9 0h1m74 0h1m26 0h1m22 0h1m7 0h1m60 0h1m-1053 24h1m3 0h1m6 0h1m2 0h1m45 0h1m4 0h1m12 0h2m14 0h1m10 0h1m43 0h1m1 0h2m4 0h1m37 0h1m2 0h1m23 0h1m12 0h1m30 0h1m68 0h1m45 0h2m33 0h1m57 0h1m6 0h1m45 0h1m6 0h1m19 0h1m10 0h1m41 0h1m38 0h1m44 0h1m45 0h1m5 0h1m89 0h1m68 0h1m27 0h1m9 0h1m31 0h1m1 0h1m16 0h1m46 0h1m10 0h1m14 0h2m-1120 1h3m4 0h1m6 0h1m2 0h3m2 0h2m5 0h2m6 0h2m11 0h6m1 0h3m3 0h6m8 0h1m3 0h1m9 0h1m7 0h1m5 0h2m7 0h1m1 0h2m1 0h1m5 0h1m5 0h3m7 0h1m6 0h1m1 0h2m4 0h1m2 0h4m16 0h1m9 0h3m11 0h1m1 0h7m19 0h1m17 0h1m2 0h1m4 0h6m12 0h3m11 0h1m1 0h4m13 0h3m9 0h1m2 0h1m3 0h2m2 0h1m2 0h1m7 0h2m11 0h2m19 0h1m12 0h1m2 0h1m5 0h1m11 0h1m1 0h3m4 0h2m14 0h2m3 0h5m8 0h2m1 0h1m3 0h3m5 0h1m1 0h3m11 0h2m2 0h4m12 0h2m8 0h1m7 0h8m5 0h5m7 0h1m1 0h6m2 0h4m1 0h7m1 0h2m4 0h1m2 0h4m1 0h2m2 0h1m4 0h1m1 0h2m5 0h1m4 0h2m5 0h6m3 0h2m5 0h5m3 0h2m3 0h1m8 0h1m4 0h1m3 0h3m12 0h4m4 0h1m3 0h1m3 0h1m5 0h3m4 0h1m7 0h1m3 0h2m16 0h1m8 0h5m1 0h6m17 0h1m3 0h1m12 0h2m1 0h2m2 0h1m28 0h1m2 0h1m3 0h1m31 0h1m5 0h1m4 0h2m7 0h3m2 0h1m3 0h2m9 0h1m15 0h3m11 0h1m3 0h5m2 0h1m1 0h1m6 0h2m20 0h2m5 0h1m2 0h1m5 0h2m11 0h1m8 0h4m4 0h1m2 0h3m5 0h2m2 0h4m3 0h1m3 0h1m12 0h1m29 0h2m7 0h3m14 0h2m-1100 5h2m5 0h3m2 0h2m1 0h4m1 0h2m3 0h1m9 0h1m14 0h1m2 0h1m2 0h2m2 0h2m4 0h1m3 0h4m2 0h1m4 0h1m1 0h1m4 0h10m5 0h1m10 0h2m7 0h2m3 0h1m8 0h1m2 0h2m3 0h1m7 0h2m7 0h1m7 0h1m5 0h3m20 0h1m7 0h2m6 0h1m9 0h1m11 0h2m1 0h1m5 0h2m4 0h1m8 0h1m1 0h2m1 0h1m5 0h2m11 0h2m8 0h1m1 0h1m10 0h1m1 0h1m4 0h2m3 0h5m3 0h2m16 0h2m9 0h1m2 0h6m5 0h1m3 0h3m6 0h3m4 0h1m2 0h1m10 0h1m3 0h5m2 0h1m8 0h1m6 0h2m3 0h2m2 0h1m14 0h1m5 0h2m3 0h1m3 0h1m3 0h2m3 0h1m1 0h3m1 0h1m1 0h2m5 0h1m2 0h1m7 0h1m18 0h1m4 0h1m8 0h2m13 0h3m6 0h3m1 0h2m2 0h2m4 0h1m1 0h1m8 0h1m9 0h1m2 0h1m4 0h4m3 0h1m1 0h2m15 0h1m4 0h5m14 0h2m10 0h1m1 0h1m4 0h1m1 0h1m1 0h1m2 0h1m3 0h13m2 0h2m6 0h1m4 0h2m4 0h2m4 0h1m18 0h1m14 0h4m3 0h1m2 0h1m3 0h1m5 0h3m1 0h1m8 0h1m1 0h1m9 0h5m2 0h3m2 0h3m2 0h1m13 0h1m13 0h1m6 0h2m3 0h1m5 0h3m5 0h1m2 0h3m3 0h1m5 0h1m8 0h5m8 0h1m2 0h1m3 0h1m3 0h3m6 0h2m7 0h2m6 0h5m6 0h2m6 0h1m1 0h5m3 0h1m2 0h2m4 0h2m3 0h1m2 0h1m3 0h1m2 0h1m13 0h1m7 0h1m1 0h6m3 0h3m5 0h1m2 0h2m3 0h5m1 0h3m11 0h1m3 0h1m1 0h9m3 0h1m8 0h1m-1091 1h1m2 0h1m59 0h1m16 0h2m2 0h1m2 0h1m18 0h1m12 0h1m8 0h1m2 0h1m67 0h1m64 0h1m48 0h1m1 0h1m32 0h1m13 0h1m5 0h1m7 0h1m51 0h1m29 0h1m18 0h1m8 0h1m92 0h1m20 0h1m6 0h1m15 0h1m82 0h1m45 0h1m8 0h1m10 0h1m31 0h1m8 0h1m34 0h1m18 0h1m2 0h1m20 0h1m3 0h1m8 0h1m6 0h1m3 0h1m36 0h1m10 0h1m9 0h1m6 0h1m13 0h1m24 0h1m8 0h1m-1056 24h1m58 0h1m2 0h1m20 0h1m2 0h1m5 0h1m8 0h1m4 0h1m10 0h1m23 0h1m1 0h1m13 0h1m6 0h2m9 0h1m1 0h1m3 0h1m45 0h1m6 0h1m43 0h1m8 0h1m7 0h1m5 0h1m11 0h1m20 0h1m13 0h1m7 0h1m29 0h1m2 0h1m36 0h1m4 0h1m34 0h1m29 0h1m10 0h1m5 0h1m8 0h1m38 0h1m2 0h2m16 0h1m14 0h1m2 0h1m55 0h1m3 0h1m8 0h1m23 0h1m36 0h1m34 0h1m19 0h1m49 0h1m5 0h1m10 0h2m29 0h1m26 0h1m1 0h1m11 0h1m11 0h1m13 0h1m7 0h1m18 0h2m10 0h1m10 0h1m3 0h1m24 0h1m19 0h2m6 0h1m40 0h1m4 0h1m13 0h1m-1118 1h2m4 0h2m3 0h1m1 0h1m4 0h1m4 0h1m1 0h1m1 0h1m1 0h1m2 0h1m1 0h6m1 0h1m2 0h3m3 0h3m5 0h5m6 0h5m1 0h1m2 0h3m2 0h1m1 0h4m3 0h1m3 0h1m4 0h1m3 0h2m3 0h1m2 0h2m2 0h2m1 0h2m3 0h1m8 0h4m3 0h1m1 0h1m1 0h1m2 0h2m1 0h1m5 0h3m4 0h2m5 0h1m3 0h3m1 0h1m1 0h5m3 0h2m3 0h1m1 0h1m1 0h1m2 0h2m3 0h3m5 0h1m7 0h2m2 0h10m3 0h2m1 0h1m1 0h4m1 0h1m1 0h3m1 0h4m1 0h2m1 0h1m1 0h3m2 0h1m1 0h2m2 0h1m1 0h2m1 0h2m2 0h4m4 0h3m2 0h5m6 0h6m1 0h1m1 0h1m2 0h1m2 0h1m2 0h2m3 0h1m1 0h3m2 0h2m2 0h1m3 0h2m4 0h1m2 0h4m4 0h2m2 0h5m4 0h1m8 0h1m2 0h2m7 0h1m4 0h1m1 0h1m7 0h1m2 0h1m2 0h2m2 0h1m1 0h2m1 0h1m2 0h1m2 0h1m4 0h1m1 0h1m1 0h1m3 0h1m1 0h1m5 0h2m2 0h2m2 0h1m2 0h2m3 0h3m1 0h5m2 0h2m2 0h4m2 0h1m2 0h5m5 0h3m4 0h2m1 0h2m2 0h1m2 0h1m1 0h1m6 0h1m3 0h2m2 0h3m1 0h1m2 0h4m2 0h1m1 0h4m3 0h1m1 0h3m1 0h4m1 0h1m3 0h2m1 0h1m2 0h2m6 0h1m5 0h2m2 0h4m1 0h1m4 0h2m1 0h1m1 0h1m3 0h4m3 0h2m5 0h1m3 0h2m2 0h5m3 0h1m6 0h1m2 0h2m2 0h2m2 0h1m1 0h1m2 0h4m1 0h1m10 0h1m4 0h2m2 0h2m7 0h1m5 0h1m7 0h3m2 0h1m4 0h1m1 0h2m2 0h1m1 0h1m2 0h2m3 0h2m1 0h1m1 0h3m4 0h3m4 0h1m2 0h2m1 0h2m2 0h6m1 0h1m1 0h4m1 0h4m8 0h1m1 0h1m3 0h1m7 0h3m4 0h1m1 0h2m1 0h2m5 0h3m4 0h2m3 0h4m2 0h2m5 0h2m4 0h4m9 0h1m1 0h1m2 0h2m9 0h1m5 0h1m1 0h2m1 0h2m1 0h3m1 0h3m1 0h1m3 0h1m3 0h1m4 0h2m1 0h1m1 0h1m1 0h1m1 0h2m1 0h1m1 0h1m5 0h4m3 0h1m1 0h1m2 0h1m2 0h1m2 0h2m2 0h2m4 0h7m4 0h2m1 0h1m1 0h3m2 0h1m1 0h2m1 0h2m3 0h1m4 0h1m2 0h3m1 0h1m6 0h1m1 0h2m1 0h1m12 0h2m2 0h2m4 0h3m2 0h1m1 0h1m3 0h3m4 0h2m9 0h1m1 0h4m1 0h2m5 0h1m2 0h1m1 0h2m2 0h1m4 0h3m1 0h2m-1120 4h2m1 0h2m3 0h2m1 0h1m1 0h2m3 0h1m6 0h1m1 0h2m2 0h2m4 0h1m2 0h6m2 0h2m1 0h1m4 0h2m2 0h2m2 0h1m5 0h1m7 0h1m2 0h1m5 0h1m1 0h2m2 0h6m3 0h2m3 0h1m4 0h1m2 0h1m2 0h2m2 0h1m7 0h6m1 0h1m2 0h4m1 0h1m4 0h1m5 0h3m2 0h1m1 0h1m3 0h4m2 0h1m3 0h2m1 0h1m1 0h4m1 0h2m1 0h1m3 0h1m1 0h1m1 0h2m1 0h4m1 0h1m1 0h2m2 0h1m11 0h1m1 0h1m1 0h1m1 0h1m4 0h3m2 0h3m2 0h3m1 0h1m5 0h2m3 0h2m6 0h2m1 0h1m1 0h1m1 0h1m3 0h1m1 0h1m1 0h1m3 0h2m1 0h2m1 0h8m1 0h4m2 0h5m3 0h1m7 0h1m2 0h1m11 0h1m5 0h1m3 0h1m2 0h1m2 0h2m3 0h2m2 0h1m1 0h3m7 0h2m6 0h2m4 0h1m1 0h4m3 0h2m1 0h3m3 0h3m1 0h1m2 0h1m1 0h2m1 0h5m1 0h1m1 0h1m1 0h2m1 0h1m3 0h2m1 0h2m1 0h1m1 0h1m3 0h1m2 0h1m1 0h1m3 0h2m2 0h1m1 0h1m2 0h2m4 0h1m2 0h1m2 0h1m3 0h4m3 0h3m4 0h1m1 0h1m1 0h2m2 0h1m3 0h3m3 0h5m2 0h3m4 0h2m2 0h1m2 0h1m4 0h1m1 0h2m1 0h1m4 0h3m5 0h3m1 0h2m2 0h4m2 0h1m1 0h1m3 0h2m1 0h1m1 0h1m2 0h1m1 0h3m1 0h4m3 0h1m6 0h1m2 0h3m2 0h2m1 0h1m1 0h1m1 0h1m2 0h3m1 0h2m1 0h4m3 0h2m3 0h1m1 0h1m2 0h2m3 0h1m2 0h4m1 0h1m1 0h1m4 0h1m2 0h1m1 0h2m1 0h4m1 0h1m1 0h1m2 0h1m1 0h4m1 0h1m3 0h2m2 0h7m5 0h2m7 0h3m1 0h1m1 0h1m1 0h1m2 0h1m1 0h1m4 0h1m2 0h2m1 0h4m2 0h3m1 0h4m3 0h2m5 0h2m2 0h1m1 0h3m2 0h1m1 0h2m1 0h1m1 0h4m1 0h1m7 0h4m1 0h4m5 0h1m1 0h1m2 0h1m2 0h1m1 0h2m1 0h2m1 0h2m2 0h1m2 0h1m3 0h1m1 0h6m1 0h1m2 0h4m1 0h1m1 0h1m3 0h3m1 0h2m1 0h1m1 0h1m1 0h2m4 0h1m1 0h1m1 0h1m1 0h4m1 0h3m3 0h1m1 0h1m1 0h1m5 0h1m2 0h2m1 0h3m1 0h6m2 0h5m4 0h3m1 0h1m1 0h4m2 0h1m2 0h1m1 0h1m1 0h1m2 0h1m1 0h2m4 0h1m3 0h1m1 0h2m1 0h2m1 0h4m2 0h1m2 0h1m1 0h4m1 0h1m1 0h1m2 0h2m2 0h2m2 0h2m1 0h2m2 0h1m2 0h1m4 0h1m1 0h1m1 0h4m2 0h3m1 0h4m1 0h3m1 0h1m2 0h3m1 0h3m1 0h3m1 0h1m1 0h4m2 0h1m4 0h2m2 0h2m2 0h2m2 0h2m2 0h3m1 0h2m1 0h2m2 0h3m1 0h3m1 0h1m2 0h1m2 0h3m1 0h2m-1121 1h1m47 0h1m44 0h1m3 0h1m17 0h1m3 0h1m14 0h2m34 0h1m2 0h1m9 0h1m1 0h1m18 0h1m4 0h1m18 0h1m32 0h1m6 0h2m18 0h1m21 0h2m12 0h1m20 0h1m9 0h2m7 0h1m20 0h1m7 0h1m21 0h1m5 0h2m8 0h1m1 0h1m24 0h1m3 0h1m13 0h1m6 0h1m26 0h1m7 0h1m5 0h1m18 0h1m25 0h1m5 0h1m59 0h1m3 0h1m19 0h1m2 0h1m35 0h1m9 0h1m27 0h1m34 0h1m17 0h1m4 0h1m7 0h1m1 0h1m16 0h1m5 0h1m5 0h1m11 0h2m1 0h3m20 0h1m17 0h2m37 0h1m1 0h1m10 0h1m34 0h1m15 0h1m4 0h1m17 0h1m24 0h1m18 0h1m6 0h1m28 0h1m6 0h1m-1055 24h1m10 0h1m79 0h1m17 0h1m110 0h1m19 0h1m64 0h1m40 0h1m34 0h1m2 0h1m82 0h1m70 0h1m2 0h1m62 0h1m8 0h1m66 0h1m24 0h1m41 0h1m46 0h1m5 0h1m131 0h1m-978 1h2m1 0h3m5 0h1m2 0h2m21 0h1m7 0h1m2 0h3m3 0h1m1 0h1m7 0h1m11 0h1m1 0h3m3 0h2m2 0h1m4 0h4m2 0h2m1 0h3m3 0h5m5 0h2m2 0h2m8 0h6m1 0h1m5 0h2m5 0h3m4 0h1m3 0h1m5 0h3m9 0h5m3 0h4m3 0h3m7 0h6m1 0h1m3 0h1m17 0h1m14 0h2m4 0h1m3 0h1m1 0h5m3 0h3m2 0h1m5 0h6m2 0h3m5 0h3m6 0h5m6 0h2m2 0h2m5 0h1m3 0h3m3 0h2m5 0h1m4 0h1m21 0h3m3 0h1m4 0h4m3 0h2m12 0h3m2 0h1m3 0h2m8 0h1m2 0h1m1 0h3m19 0h2m1 0h1m9 0h2m1 0h2m7 0h4m13 0h1m6 0h1m3 0h4m5 0h7m1 0h4m18 0h1m11 0h1m1 0h1m2 0h2m4 0h2m7 0h3m5 0h6m3 0h1m10 0h1m7 0h1m2 0h2m10 0h2m1 0h1m20 0h1m7 0h3m3 0h1m1 0h2m4 0h2m5 0h3m4 0h1m2 0h2m3 0h1m2 0h1m7 0h2m4 0h1m7 0h1m6 0h2m5 0h2m15 0h2m5 0h1m1 0h1m3 0h1m11 0h3m4 0h2m9 0h1m2 0h2m4 0h1m5 0h1m9 0h1m3 0h4m13 0h3m1 0h4m17 0h1m3 0h2m6 0h2m4 0h2m1 0h1m23 0h3m1 0h4m5 0h1m3 0h1m20 0h1m1 0h1m2 0h1m12 0h3m1 0h1m3 0h1m3 0h4m2 0h2m3 0h1m1 0h8m10 0h2m6 0h1m1 0h2m7 0h1m15 0h2m6 0h2m1 0h3m3 0h1m5 0h1m9 0h5m7 0h1m9 0h2m1 0h1m1 0h3m11 0h2m-1120 4h5m7 0h3m4 0h1m7 0h2m1 0h1m2 0h2m5 0h1m11 0h2m1 0h1m4 0h2m3 0h2m4 0h1m1 0h3m9 0h1m4 0h2m7 0h2m5 0h1m5 0h1m2 0h1m1 0h1m1 0h1m1 0h2m7 0h6m5 0h1m7 0h3m14 0h5m1 0h1m1 0h1m7 0h2m8 0h1m3 0h7m6 0h1m2 0h2m4 0h1m15 0h2m2 0h1m2 0h2m2 0h1m9 0h2m9 0h4m5 0h1m22 0h2m10 0h1m14 0h1m2 0h1m8 0h2m2 0h1m5 0h1m3 0h1m4 0h1m1 0h1m1 0h1m7 0h1m5 0h1m9 0h3m2 0h2m1 0h1m5 0h1m7 0h1m15 0h2m1 0h1m1 0h5m2 0h2m2 0h2m4 0h1m5 0h2m14 0h2m13 0h3m2 0h1m5 0h8m5 0h1m4 0h1m4 0h1m1 0h4m1 0h2m2 0h1m11 0h1m4 0h1m5 0h2m4 0h2m1 0h3m2 0h5m3 0h3m2 0h1m5 0h2m1 0h2m13 0h1m2 0h2m1 0h4m6 0h2m6 0h4m14 0h3m5 0h5m5 0h5m4 0h3m10 0h6m4 0h3m5 0h6m12 0h3m8 0h1m6 0h3m2 0h4m7 0h3m6 0h6m4 0h1m7 0h1m4 0h2m4 0h1m7 0h1m17 0h2m4 0h1m18 0h1m1 0h1m8 0h1m5 0h1m6 0h1m2 0h1m3 0h1m6 0h1m2 0h4m2 0h2m2 0h1m5 0h1m12 0h1m2 0h4m1 0h3m1 0h2m5 0h1m4 0h1m10 0h2m4 0h3m7 0h1m1 0h3m7 0h1m7 0h1m1 0h6m4 0h1m1 0h1m1 0h1m2 0h1m3 0h1m12 0h3m2 0h1m13 0h2m7 0h2m1 0h3m1 0h1m1 0h1m5 0h1m2 0h3m3 0h1m16 0h1m1 0h1m4 0h3m3 0h4m9 0h2m2 0h1m3 0h1m-1070 1h1m21 0h1m10 0h1m45 0h1m42 0h1m70 0h1m52 0h2m38 0h1m88 0h1m2 0h1m55 0h1m12 0h1m5 0h1m110 0h1m10 0h1m134 0h1m2 0h1m50 0h1m67 0h1m67 0h1m13 0h1m51 0h1m1 0h1m92 0h1m-1114 24h2m120 0h1m56 0h1m72 0h1m56 0h1m32 0h1m24 0h1m41 0h1m222 0h1m78 0h1m182 0h1m4 0h2m101 0h1m63 0h1m-1068 1h4m5 0h1m10 0h2m7 0h2m4 0h2m8 0h1m19 0h1m11 0h2m8 0h1m2 0h2m7 0h1m23 0h3m22 0h1m6 0h1m23 0h2m13 0h2m2 0h2m8 0h4m9 0h1m8 0h1m2 0h2m2 0h2m14 0h1m5 0h1m14 0h1m23 0h5m7 0h2m6 0h1m18 0h1m1 0h1m3 0h1m14 0h3m7 0h2m1 0h2m16 0h2m1 0h1m14 0h2m1 0h1m9 0h1m3 0h1m21 0h1m2 0h3m6 0h1m1 0h4m19 0h1m2 0h1m41 0h2m27 0h1m7 0h1m2 0h1m5 0h1m20 0h4m3 0h3m1 0h1m1 0h1m7 0h1m1 0h2m13 0h2m11 0h2m38 0h2m5 0h1m10 0h3m4 0h4m6 0h2m3 0h3m10 0h2m2 0h2m9 0h2m20 0h2m26 0h2m10 0h5m27 0h1m4 0h1m16 0h1m3 0h2m12 0h1m3 0h4m3 0h3m8 0h2m4 0h2m6 0h4m19 0h2m17 0h1m3 0h2m7 0h2m16 0h7m11 0h1m1 0h4m3 0h1m17 0h1m4 0h3m12 0h1m3 0h2m15 0h1m23 0h1m7 0h1m-1116 5h3m8 0h1m5 0h2m1 0h1m6 0h1m17 0h1m3 0h2m1 0h1m7 0h1m3 0h1m8 0h5m4 0h2m1 0h1m8 0h1m28 0h4m4 0h1m2 0h3m1 0h1m8 0h5m8 0h1m17 0h2m3 0h6m5 0h1m3 0h2m1 0h10m5 0h2m2 0h1m16 0h1m4 0h2m29 0h2m10 0h3m8 0h1m2 0h1m3 0h1m2 0h1m2 0h1m6 0h1m3 0h2m10 0h2m1 0h1m9 0h2m4 0h1m2 0h1m2 0h4m2 0h3m3 0h1m5 0h1m3 0h3m7 0h1m18 0h2m10 0h1m3 0h1m11 0h3m8 0h2m35 0h1m6 0h2m14 0h2m10 0h1m6 0h1m3 0h1m21 0h1m5 0h2m1 0h3m15 0h3m9 0h1m26 0h1m11 0h4m6 0h4m2 0h2m7 0h2m34 0h1m17 0h1m7 0h1m7 0h1m10 0h1m7 0h3m6 0h2m14 0h7m18 0h2m5 0h2m3 0h6m6 0h1m8 0h4m18 0h3m3 0h2m2 0h5m3 0h3m2 0h1m2 0h2m2 0h1m5 0h1m5 0h3m10 0h5m3 0h5m5 0h7m4 0h2m13 0h1m3 0h1m9 0h2m1 0h2m15 0h1m8 0h2m13 0h3m24 0h3m21 0h1m16 0h2m1 0h1m40 0h1m-1102 1h1m42 0h1m22 0h1m64 0h1m30 0h1m7 0h1m10 0h1m87 0h1m82 0h1m149 0h1m171 0h1m17 0h1m35 0h1m55 0h1m4 0h1m4 0h1m57 0h1m15 0h1m47 0h1m-781 24h1m16 0h1m38 0h1m36 0h1m19 0h1m66 0h1m9 0h1m31 0h1m66 0h1m18 0h1m52 0h1m62 0h1m74 0h1m71 0h1m3 0h1m1 0h1m30 0h1m13 0h1m10 0h1m5 0h1m18 0h1m9 0h1m51 0h1m20 0h1m86 0h1m6 0h2m-990 1h1m6 0h1m1 0h1m5 0h1m3 0h2m11 0h5m13 0h2m2 0h1m10 0h1m9 0h3m6 0h2m1 0h7m9 0h2m3 0h1m6 0h1m5 0h2m3 0h1m10 0h1m5 0h1m3 0h1m2 0h1m2 0h1m9 0h3m1 0h4m7 0h5m3 0h1m8 0h1m13 0h1m17 0h1m3 0h2m8 0h3m1 0h2m12 0h2m1 0h2m2 0h2m7 0h2m3 0h3m5 0h1m11 0h1m17 0h1m2 0h2m2 0h9m1 0h1m6 0h4m5 0h1m4 0h4m10 0h1m2 0h6m5 0h2m8 0h1m1 0h1m3 0h2m5 0h3m3 0h1m1 0h1m2 0h1m2 0h2m4 0h2m3 0h2m2 0h2m3 0h4m2 0h1m11 0h3m3 0h3m1 0h1m9 0h1m5 0h1m7 0h1m11 0h1m2 0h2m3 0h4m6 0h2m19 0h1m13 0h1m11 0h1m6 0h1m5 0h1m4 0h1m4 0h1m1 0h1m1 0h1m15 0h2m29 0h1m2 0h1m1 0h4m3 0h3m11 0h1m1 0h1m3 0h6m1 0h1m9 0h5m16 0h1m1 0h2m1 0h1m4 0h1m3 0h3m3 0h2m1 0h1m2 0h1m10 0h2m4 0h3m1 0h2m4 0h1m7 0h1m3 0h5m1 0h3m4 0h2m8 0h1m2 0h1m2 0h2m1 0h2m4 0h1m2 0h2m4 0h1m5 0h4m13 0h1m13 0h1m5 0h2m1 0h2m13 0h6m1 0h3m2 0h3m2 0h1m10 0h2m4 0h2m25 0h1m1 0h4m4 0h1m4 0h3m1 0h5m7 0h3m3 0h6m9 0h1m9 0h1m1 0h1m20 0h1m1 0h1m1 0h4m1 0h2m6 0h1m4 0h1m18 0h3m7 0h1m2 0h1m1 0h2m1 0h1m20 0h1m3 0h1m-1114 4h1m1 0h1m8 0h1m6 0h2m4 0h1m7 0h1m1 0h1m2 0h2m1 0h1m5 0h2m11 0h1m11 0h1m1 0h2m3 0h1m1 0h2m1 0h1m16 0h3m13 0h2m3 0h1m3 0h2m1 0h6m6 0h1m2 0h1m2 0h2m5 0h1m1 0h1m3 0h2m2 0h4m8 0h5m6 0h3m3 0h6m3 0h2m4 0h2m7 0h2m1 0h1m3 0h4m11 0h3m1 0h1m12 0h2m3 0h1m2 0h2m2 0h1m2 0h1m12 0h1m1 0h1m3 0h1m14 0h2m16 0h1m6 0h7m5 0h3m1 0h1m13 0h1m7 0h1m10 0h1m2 0h3m4 0h1m4 0h1m2 0h6m6 0h3m7 0h3m6 0h2m1 0h1m1 0h4m1 0h3m3 0h1m5 0h1m5 0h2m1 0h3m3 0h1m3 0h1m1 0h4m16 0h1m1 0h2m4 0h2m2 0h2m9 0h3m5 0h1m11 0h1m5 0h2m2 0h2m8 0h1m2 0h1m2 0h7m2 0h2m6 0h2m14 0h1m3 0h1m3 0h2m1 0h1m10 0h1m7 0h2m1 0h1m3 0h2m1 0h7m4 0h4m1 0h1m4 0h2m1 0h2m5 0h2m5 0h3m8 0h1m5 0h1m2 0h2m3 0h2m6 0h2m3 0h3m1 0h2m2 0h2m6 0h1m1 0h2m3 0h1m1 0h5m6 0h5m1 0h1m5 0h2m23 0h2m2 0h4m3 0h1m2 0h1m1 0h8m4 0h1m1 0h1m8 0h1m4 0h2m3 0h1m2 0h2m1 0h1m5 0h1m1 0h1m4 0h1m1 0h1m3 0h1m8 0h2m1 0h1m2 0h2m1 0h1m2 0h3m4 0h1m7 0h2m1 0h1m3 0h6m2 0h1m1 0h6m9 0h1m10 0h5m4 0h3m2 0h1m7 0h2m1 0h1m2 0h3m1 0h3m1 0h1m8 0h3m1 0h2m5 0h2m5 0h4m9 0h1m6 0h1m1 0h1m7 0h1m1 0h2m2 0h7m2 0h3m5 0h1m6 0h1m2 0h1m4 0h1m5 0h3m6 0h2m2 0h1m3 0h1m2 0h1m2 0h3m1 0h3m3 0h2m2 0h1m4 0h1m1 0h3m-1107 1h1m22 0h1m97 0h1m60 0h1m76 0h1m122 0h1m64 0h1m5 0h1m104 0h1m44 0h1m15 0h1m12 0h1m60 0h1m29 0h1m1 0h1m8 0h1m10 0h1m28 0h1m9 0h1m8 0h1m86 0h1m17 0h1m33 0h1m47 0h1m37 0h1m30 0h1m19 0h1m3 0h1m10 0h1m-1087 24h1m26 0h1m38 0h1m18 0h1m4 0h1m13 0h1m82 0h1m58 0h1m48 0h1m21 0h1m5 0h1m23 0h1m33 0h1m37 0h1m8 0h1m45 0h1m22 0h1m19 0h1m33 0h1m40 0h1m37 0h1m35 0h1m179 0h1m55 0h1m50 0h1m45 0h1m-1012 1h1m10 0h2m9 0h1m3 0h4m8 0h2m12 0h3m5 0h1m11 0h3m2 0h2m8 0h2m6 0h9m3 0h4m2 0h7m8 0h1m12 0h3m8 0h5m1 0h2m2 0h1m7 0h2m2 0h1m4 0h1m9 0h1m8 0h4m5 0h2m9 0h2m1 0h1m6 0h1m9 0h1m5 0h1m8 0h2m2 0h2m5 0h1m2 0h2m33 0h2m3 0h2m11 0h1m6 0h3m5 0h1m3 0h1m19 0h1m4 0h1m3 0h2m23 0h1m16 0h1m19 0h2m3 0h1m4 0h2m1 0h1m7 0h2m8 0h6m5 0h1m2 0h1m1 0h1m8 0h2m5 0h2m11 0h4m7 0h2m9 0h2m14 0h1m5 0h2m1 0h4m6 0h2m1 0h1m6 0h2m8 0h1m4 0h8m1 0h1m1 0h1m2 0h5m2 0h1m6 0h3m9 0h2m7 0h6m7 0h3m2 0h1m2 0h1m2 0h3m14 0h1m2 0h2m7 0h1m3 0h3m5 0h4m1 0h1m2 0h3m2 0h2m15 0h1m10 0h3m2 0h2m7 0h2m1 0h1m1 0h2m4 0h4m3 0h3m4 0h1m8 0h1m1 0h1m8 0h1m17 0h1m6 0h1m12 0h1m10 0h1m5 0h4m9 0h1m9 0h2m9 0h1m5 0h3m3 0h2m4 0h1m4 0h2m3 0h1m5 0h1m17 0h1m5 0h2m5 0h2m7 0h4m8 0h2m11 0h4m5 0h1m1 0h1m9 0h1m5 0h1m5 0h1m1 0h2m1 0h1m2 0h2m6 0h1m17 0h1m5 0h2m2 0h1m6 0h1m2 0h3m12 0h1m6 0h1m12 0h2m2 0h1m-1118 4h1m1 0h1m7 0h1m10 0h1m3 0h2m5 0h2m2 0h1m5 0h1m9 0h1m1 0h3m4 0h1m9 0h2m7 0h1m14 0h1m12 0h2m4 0h4m1 0h3m4 0h4m19 0h1m6 0h2m1 0h1m12 0h2m3 0h1m1 0h1m2 0h2m7 0h4m1 0h2m9 0h1m5 0h1m4 0h1m3 0h1m2 0h1m12 0h3m5 0h1m2 0h4m6 0h1m16 0h1m4 0h1m1 0h1m2 0h1m3 0h2m1 0h2m13 0h1m3 0h2m1 0h2m2 0h13m1 0h3m6 0h4m1 0h2m1 0h1m7 0h4m3 0h3m2 0h1m1 0h1m6 0h1m4 0h1m3 0h2m5 0h4m4 0h2m1 0h3m5 0h1m6 0h1m1 0h2m1 0h1m1 0h4m4 0h1m5 0h4m17 0h4m1 0h1m7 0h3m7 0h1m11 0h1m8 0h4m3 0h3m14 0h4m5 0h1m1 0h1m14 0h1m11 0h3m2 0h2m1 0h1m2 0h2m5 0h4m1 0h1m8 0h1m1 0h1m4 0h3m3 0h2m2 0h2m1 0h5m2 0h1m3 0h2m8 0h3m4 0h4m6 0h1m3 0h1m3 0h2m4 0h3m4 0h5m3 0h1m11 0h2m10 0h1m8 0h1m6 0h3m1 0h1m3 0h1m3 0h1m2 0h1m8 0h1m5 0h2m10 0h2m8 0h2m1 0h2m6 0h1m9 0h2m3 0h1m2 0h2m12 0h1m2 0h1m2 0h1m2 0h1m7 0h5m2 0h2m3 0h2m11 0h2m2 0h2m14 0h2m1 0h1m6 0h1m6 0h3m10 0h2m2 0h4m6 0h1m2 0h3m9 0h2m4 0h1m5 0h1m1 0h1m3 0h1m7 0h3m3 0h1m9 0h2m1 0h2m1 0h1m8 0h1m11 0h1m4 0h1m2 0h1m1 0h1m9 0h5m3 0h4m6 0h1m7 0h2m3 0h1m2 0h2m2 0h3m5 0h2m1 0h3m6 0h1m5 0h2m1 0h1m2 0h2m4 0h3m10 0h1m-1009 1h1m58 0h1m9 0h1m92 0h1m43 0h1m1 0h1m3 0h1m4 0h1m47 0h1m96 0h1m39 0h1m16 0h1m76 0h1m52 0h1m20 0h1m58 0h1m37 0h1m59 0h2m23 0h1m3 0h1m24 0h1m20 0h1m12 0h1m71 0h1m40 0h1m1 0h1m58 0h1m-517 24h1m159 0h1m265 0h1m100 0h1m8 0h1m-1122 1h1m1 0h1m1 0h2m12 0h4m25 0h1m10 0h2m15 0h2m2 0h3m5 0h2m49 0h2m10 0h3m30 0h1m22 0h2m6 0h2m4 0h1m13 0h2m6 0h3m21 0h3m15 0h1m20 0h1m3 0h1m29 0h1m11 0h1m9 0h4m2 0h5m6 0h4m42 0h1m12 0h2m3 0h1m18 0h1m5 0h1m10 0h1m3 0h1m2 0h1m13 0h1m22 0h1m6 0h2m32 0h3m12 0h1m4 0h5m4 0h1m7 0h1m18 0h1m14 0h1m2 0h1m35 0h1m8 0h1m8 0h1m10 0h1m29 0h1m12 0h3m6 0h3m6 0h2m16 0h1m2 0h2m1 0h1m14 0h1m6 0h3m1 0h2m6 0h1m12 0h2m2 0h1m26 0h1m9 0h1m15 0h2m2 0h1m1 0h2m6 0h2m4 0h1m8 0h1m1 0h1m17 0h3m33 0h1m6 0h1m3 0h1m1 0h5m2 0h1m14 0h2m3 0h1m28 0h2m14 0h5m10 0h1m21 0h1m13 0h1m8 0h1m-1116 5h2m2 0h2m9 0h2m10 0h4m1 0h1m9 0h3m3 0h2m15 0h2m5 0h1m6 0h4m17 0h1m1 0h4m6 0h2m1 0h2m4 0h1m17 0h3m28 0h3m28 0h5m11 0h1m10 0h2m1 0h1m3 0h2m2 0h2m1 0h3m10 0h5m7 0h1m5 0h1m5 0h1m4 0h1m5 0h1m12 0h1m11 0h2m8 0h2m8 0h1m7 0h1m3 0h2m1 0h5m5 0h3m9 0h2m15 0h1m19 0h1m6 0h1m7 0h2m15 0h1m5 0h2m2 0h2m6 0h1m1 0h2m17 0h1m18 0h1m2 0h1m9 0h2m12 0h1m16 0h4m3 0h1m8 0h2m2 0h2m30 0h3m3 0h1m3 0h6m2 0h1m22 0h3m9 0h2m6 0h3m5 0h3m2 0h1m7 0h2m4 0h1m29 0h3m14 0h2m2 0h2m2 0h4m4 0h4m13 0h1m7 0h2m9 0h1m9 0h1m1 0h1m15 0h1m3 0h3m19 0h2m8 0h1m16 0h2m1 0h4m12 0h2m3 0h1m3 0h4m2 0h5m20 0h5m11 0h2m4 0h2m1 0h1m2 0h4m15 0h2m30 0h1m1 0h1m5 0h5m6 0h1m24 0h1m4 0h1m2 0h1m21 0h1m1 0h3m17 0h1m3 0h2m-1088 1h1m49 0h1m49 0h1m24 0h1m87 0h1m11 0h1m38 0h1m92 0h1m51 0h1m125 0h1m59 0h1m47 0h1m19 0h1m157 0h1m32 0h1m52 0h2m1 0h1m77 0h1m5 0h1m-993 24h1m3 0h1m43 0h1m108 0h1m61 0h1m40 0h1m11 0h1m1 0h1m18 0h1m6 0h1m69 0h1m10 0h1m5 0h1m20 0h1m55 0h1m19 0h1m118 0h1m36 0h1m79 0h1m92 0h1m46 0h1m12 0h1m21 0h1m32 0h1m66 0h1m18 0h1m15 0h1m48 0h1m-1105 1h1m4 0h4m2 0h2m9 0h1m2 0h1m2 0h2m5 0h1m9 0h2m3 0h1m7 0h4m11 0h1m4 0h1m5 0h9m12 0h1m4 0h1m2 0h3m2 0h2m3 0h1m2 0h2m3 0h1m3 0h1m1 0h4m5 0h3m2 0h1m6 0h1m9 0h1m1 0h3m3 0h4m2 0h3m2 0h5m4 0h4m7 0h1m6 0h1m6 0h2m8 0h3m5 0h1m4 0h1m2 0h1m4 0h1m13 0h1m6 0h3m1 0h3m1 0h5m8 0h1m1 0h4m2 0h1m8 0h1m4 0h7m2 0h2m1 0h1m5 0h1m13 0h1m11 0h2m5 0h4m12 0h1m3 0h1m2 0h2m3 0h2m3 0h1m4 0h2m1 0h2m1 0h2m4 0h4m10 0h3m1 0h2m9 0h4m8 0h2m1 0h2m1 0h1m6 0h2m15 0h3m1 0h2m1 0h3m1 0h1m2 0h2m1 0h3m1 0h4m1 0h1m16 0h1m5 0h1m8 0h3m1 0h1m1 0h4m9 0h2m4 0h5m4 0h1m5 0h1m9 0h2m17 0h1m3 0h6m1 0h4m11 0h2m22 0h3m12 0h7m2 0h2m8 0h2m1 0h2m15 0h1m2 0h1m4 0h3m7 0h2m3 0h1m1 0h3m1 0h1m3 0h3m1 0h2m2 0h1m1 0h1m1 0h2m3 0h1m3 0h1m4 0h3m29 0h2m1 0h2m8 0h1m12 0h1m1 0h1m3 0h1m1 0h2m13 0h1m4 0h2m6 0h3m4 0h2m4 0h1m9 0h4m2 0h1m6 0h2m3 0h1m6 0h2m20 0h1m3 0h8m2 0h2m2 0h1m1 0h1m2 0h1m8 0h1m9 0h1m1 0h1m3 0h4m1 0h1m6 0h1m5 0h2m3 0h2m3 0h1m1 0h3m14 0h5m3 0h1m8 0h2m1 0h1m13 0h1m15 0h1m12 0h1m2 0h4m6 0h1m1 0h2m2 0h1m-1118 4h1m1 0h1m3 0h2m1 0h2m2 0h3m6 0h1m1 0h1m3 0h4m5 0h2m12 0h3m4 0h3m1 0h1m4 0h3m5 0h2m3 0h1m11 0h1m8 0h4m1 0h3m11 0h1m3 0h1m7 0h2m4 0h1m3 0h1m1 0h2m5 0h3m15 0h5m9 0h1m3 0h3m19 0h1m7 0h1m10 0h1m2 0h1m6 0h1m4 0h1m2 0h1m7 0h2m4 0h1m2 0h1m6 0h1m2 0h3m4 0h1m2 0h1m5 0h1m6 0h1m1 0h2m7 0h7m13 0h3m1 0h2m4 0h3m8 0h1m1 0h3m19 0h1m3 0h3m1 0h1m2 0h4m6 0h8m10 0h1m3 0h1m3 0h2m6 0h1m2 0h1m1 0h1m1 0h2m5 0h1m11 0h5m1 0h2m6 0h5m6 0h1m1 0h2m1 0h5m7 0h2m8 0h2m2 0h2m2 0h2m9 0h1m2 0h2m10 0h4m2 0h3m1 0h1m4 0h1m13 0h5m11 0h3m5 0h7m6 0h2m5 0h1m1 0h2m2 0h4m6 0h1m1 0h1m6 0h1m8 0h1m3 0h1m2 0h1m1 0h1m1 0h1m1 0h3m3 0h1m4 0h3m4 0h1m1 0h1m5 0h2m8 0h3m5 0h1m5 0h1m8 0h2m2 0h3m2 0h4m2 0h1m3 0h2m4 0h4m12 0h1m4 0h1m2 0h5m1 0h1m5 0h1m6 0h1m10 0h1m18 0h3m4 0h2m9 0h1m3 0h2m13 0h1m2 0h1m6 0h2m1 0h1m2 0h2m3 0h1m1 0h5m9 0h4m6 0h1m2 0h3m3 0h1m3 0h1m3 0h5m7 0h1m6 0h1m8 0h3m2 0h2m3 0h1m5 0h1m3 0h5m1 0h1m10 0h1m1 0h1m1 0h2m7 0h3m1 0h3m1 0h1m3 0h3m1 0h1m4 0h1m11 0h1m1 0h3m1 0h1m4 0h2m4 0h2m2 0h2m21 0h3m1 0h2m9 0h1m6 0h2m3 0h3m2 0h2m3 0h3m9 0h1m-1116 1h1m31 0h1m14 0h1m22 0h1m3 0h1m51 0h1m105 0h1m16 0h1m73 0h1m54 0h1m120 0h1m112 0h1m41 0h1m25 0h1m35 0h1m93 0h2m52 0h1m7 0h1m24 0h2m56 0h1m22 0h1m11 0h1m-973 24h1m18 0h1m83 0h1m12 0h1m23 0h1m9 0h1m44 0h1m21 0h1m96 0h1m270 0h1m1 0h1m41 0h1m31 0h1m1 0h1m2 0h1m39 0h1m60 0h1m34 0h1m43 0h1m3 0h1m14 0h1m23 0h1m17 0h1m10 0h1m13 0h1m149 0h1m-1093 1h3m5 0h4m3 0h1m3 0h4m6 0h3m6 0h1m3 0h1m1 0h1m14 0h1m5 0h1m9 0h4m6 0h1m3 0h4m3 0h3m4 0h3m2 0h1m4 0h1m1 0h1m5 0h1m2 0h1m1 0h2m2 0h1m3 0h1m13 0h5m1 0h2m4 0h1m2 0h1m3 0h1m2 0h3m15 0h3m7 0h1m5 0h2m6 0h2m11 0h1m1 0h1m4 0h7m15 0h1m14 0h2m28 0h3m7 0h1m3 0h1m9 0h2m12 0h2m10 0h3m3 0h2m8 0h1m1 0h1m4 0h1m6 0h1m3 0h2m6 0h1m3 0h1m8 0h1m21 0h1m3 0h3m4 0h1m2 0h3m2 0h2m4 0h1m12 0h1m18 0h1m3 0h1m30 0h3m2 0h3m13 0h1m38 0h1m7 0h1m6 0h3m1 0h1m8 0h2m13 0h6m3 0h3m5 0h3m3 0h4m16 0h3m1 0h1m2 0h3m1 0h3m6 0h1m9 0h2m3 0h1m2 0h3m6 0h1m3 0h2m1 0h2m3 0h1m4 0h1m1 0h4m24 0h1m8 0h1m1 0h1m1 0h2m4 0h1m1 0h2m18 0h2m5 0h1m2 0h5m6 0h4m5 0h1m7 0h2m5 0h1m8 0h1m1 0h4m1 0h1m9 0h6m10 0h4m3 0h3m3 0h2m15 0h2m1 0h1m8 0h3m9 0h1m1 0h4m2 0h2m1 0h2m1 0h1m3 0h2m10 0h1m7 0h2m4 0h5m11 0h1m6 0h2m17 0h2m5 0h5m26 0h1m4 0h1m9 0h1m4 0h1m1 0h1m2 0h1m2 0h1m12 0h2m-1122 4h4m8 0h1m1 0h5m1 0h5m7 0h1m8 0h1m6 0h1m1 0h1m3 0h1m1 0h6m9 0h1m5 0h6m1 0h2m2 0h2m4 0h2m4 0h3m2 0h3m3 0h4m5 0h3m5 0h4m4 0h1m2 0h1m3 0h1m1 0h1m2 0h3m1 0h1m27 0h1m5 0h1m3 0h2m4 0h3m2 0h1m4 0h1m3 0h2m12 0h1m12 0h2m1 0h1m12 0h1m4 0h1m3 0h1m7 0h1m1 0h3m1 0h3m3 0h1m5 0h2m2 0h1m17 0h1m4 0h1m2 0h1m2 0h1m3 0h1m3 0h2m1 0h1m4 0h1m4 0h1m1 0h3m2 0h1m9 0h3m1 0h1m7 0h1m1 0h3m2 0h3m6 0h2m1 0h3m10 0h3m7 0h3m6 0h1m5 0h2m2 0h5m2 0h2m3 0h2m2 0h1m7 0h1m5 0h1m4 0h5m4 0h1m10 0h1m1 0h1m12 0h1m2 0h2m1 0h2m1 0h3m6 0h3m2 0h2m7 0h1m11 0h2m8 0h3m8 0h5m1 0h2m4 0h3m9 0h1m6 0h5m1 0h1m14 0h3m4 0h3m1 0h3m9 0h1m2 0h4m5 0h1m1 0h1m3 0h7m2 0h5m2 0h1m2 0h3m1 0h2m5 0h3m3 0h1m3 0h1m6 0h1m2 0h1m4 0h2m5 0h2m1 0h2m11 0h1m1 0h1m6 0h2m2 0h1m2 0h1m2 0h2m13 0h2m9 0h2m9 0h2m4 0h1m23 0h1m6 0h1m15 0h2m2 0h1m3 0h4m3 0h3m3 0h1m4 0h3m11 0h4m6 0h1m6 0h1m2 0h3m5 0h1m3 0h1m6 0h1m2 0h2m2 0h1m3 0h3m1 0h1m2 0h2m1 0h2m9 0h1m4 0h2m21 0h2m5 0h6m9 0h2m9 0h2m4 0h4m3 0h1m10 0h1m13 0h4m1 0h1m14 0h1m12 0h1m3 0h1m7 0h1m4 0h1m2 0h1m6 0h4m1 0h1m-1091 1h1m24 0h1m37 0h1m32 0h1m7 0h1m73 0h1m51 0h1m124 0h1m25 0h1m19 0h1m37 0h1m33 0h1m6 0h1m12 0h2m30 0h1m10 0h1m2 0h1m8 0h1m17 0h1m66 0h1m5 0h1m11 0h1m70 0h1m40 0h1m77 0h1m145 0h1m5 0h1m6 0h1m24 0h1m52 0h1m-1041 24h1m156 0h1m77 0h1m12 0h1m36 0h2m104 0h1m77 0h1m16 0h1m246 0h1m287 0h1m28 0h1m-1102 1h1m6 0h1m1 0h1m1 0h2m25 0h2m11 0h4m26 0h2m22 0h1m7 0h1m18 0h5m1 0h1m1 0h1m8 0h4m4 0h1m17 0h1m9 0h1m15 0h1m6 0h2m5 0h2m31 0h4m28 0h2m4 0h1m2 0h2m6 0h3m6 0h2m19 0h1m6 0h4m94 0h1m3 0h8m11 0h1m14 0h2m2 0h1m2 0h1m14 0h1m2 0h5m20 0h1m16 0h2m22 0h2m10 0h2m25 0h1m3 0h2m18 0h2m5 0h2m2 0h2m4 0h1m4 0h2m6 0h3m34 0h2m2 0h1m28 0h1m29 0h1m10 0h4m13 0h1m1 0h2m10 0h1m14 0h1m6 0h1m30 0h7m5 0h3m35 0h2m14 0h4m1 0h4m8 0h3m9 0h1m6 0h1m3 0h1m1 0h4m18 0h1m3 0h2m41 0h1m14 0h4m10 0h2m14 0h2m11 0h3m1 0h1m7 0h2m1 0h3m-1116 5h5m7 0h3m5 0h2m5 0h2m8 0h1m6 0h1m9 0h2m8 0h2m2 0h2m6 0h1m22 0h1m10 0h1m5 0h6m5 0h1m16 0h1m4 0h1m9 0h2m14 0h1m23 0h1m2 0h1m1 0h2m5 0h4m7 0h2m1 0h4m13 0h1m1 0h1m18 0h1m15 0h3m4 0h1m8 0h2m1 0h2m3 0h3m13 0h1m3 0h2m2 0h1m12 0h1m9 0h2m2 0h1m4 0h3m1 0h4m1 0h2m2 0h2m12 0h2m19 0h3m1 0h2m7 0h1m2 0h1m22 0h4m4 0h1m19 0h3m6 0h1m6 0h4m18 0h2m14 0h1m10 0h3m4 0h2m5 0h4m17 0h1m5 0h1m10 0h3m13 0h1m8 0h3m20 0h3m20 0h1m7 0h2m2 0h3m8 0h2m17 0h1m9 0h2m13 0h3m2 0h3m2 0h1m3 0h4m5 0h1m1 0h3m1 0h2m12 0h1m8 0h2m2 0h1m5 0h1m10 0h4m11 0h1m16 0h1m6 0h1m1 0h2m7 0h4m2 0h2m1 0h3m15 0h1m2 0h1m3 0h3m4 0h1m4 0h4m7 0h1m1 0h1m2 0h1m5 0h8m11 0h1m4 0h1m3 0h1m24 0h3m21 0h1m3 0h1m1 0h2m2 0h1m17 0h1m1 0h10m24 0h2m26 0h1m2 0h3m4 0h1m7 0h1m6 0h1m-1114 1h1m19 0h1m32 0h1m144 0h1m151 0h1m287 0h1m90 0h1m12 0h1m15 0h1m25 0h1m19 0h1m11 0h1m107 0h1m167 0h1m5 0h1m-1082 24h1m107 0h1m92 0h1m10 0h1m8 0h1m12 0h2m27 0h1m3 0h1m29 0h1m25 0h1m12 0h1m60 0h1m2 0h1m14 0h1m226 0h1m13 0h1m9 0h1m14 0h1m13 0h1m16 0h2m48 0h1m36 0h1m61 0h1m32 0h1m12 0h1m73 0h1m51 0h1m32 0h1m-1085 1h1m16 0h8m2 0h2m5 0h4m18 0h1m27 0h6m7 0h2m2 0h1m7 0h2m13 0h3m20 0h2m3 0h1m4 0h1m2 0h1m38 0h2m2 0h2m1 0h2m11 0h2m2 0h3m4 0h1m5 0h1m2 0h1m3 0h1m4 0h1m3 0h2m3 0h2m5 0h3m5 0h3m6 0h2m2 0h1m9 0h1m4 0h1m7 0h1m2 0h6m7 0h2m15 0h2m6 0h1m4 0h2m6 0h5m1 0h2m3 0h4m4 0h2m1 0h3m14 0h2m10 0h3m2 0h2m4 0h1m1 0h2m3 0h1m1 0h1m1 0h2m6 0h4m19 0h1m4 0h2m3 0h2m16 0h4m3 0h4m5 0h4m8 0h2m7 0h5m2 0h1m3 0h2m29 0h1m2 0h2m9 0h1m4 0h3m4 0h2m1 0h1m8 0h1m1 0h1m5 0h1m5 0h1m5 0h3m19 0h1m4 0h1m1 0h1m3 0h3m3 0h6m2 0h1m5 0h1m1 0h1m1 0h1m6 0h1m3 0h1m7 0h1m2 0h6m1 0h2m3 0h3m5 0h3m3 0h2m3 0h1m5 0h1m4 0h1m7 0h2m4 0h2m3 0h1m7 0h2m4 0h2m4 0h1m1 0h1m1 0h1m4 0h3m9 0h1m4 0h1m4 0h1m1 0h3m7 0h1m14 0h1m1 0h7m1 0h1m5 0h2m12 0h1m3 0h1m7 0h1m6 0h1m1 0h3m9 0h1m8 0h1m1 0h1m1 0h1m10 0h1m9 0h2m7 0h2m3 0h3m21 0h2m2 0h1m8 0h4m6 0h1m19 0h2m4 0h1m17 0h3m6 0h1m13 0h3m5 0h3m14 0h2m5 0h1m-1111 4h2m6 0h1m4 0h3m1 0h1m17 0h1m1 0h2m12 0h4m1 0h1m1 0h3m1 0h2m2 0h2m1 0h1m8 0h1m3 0h1m1 0h1m2 0h2m4 0h3m19 0h1m1 0h1m1 0h3m2 0h1m5 0h3m7 0h1m1 0h1m4 0h1m2 0h3m3 0h1m7 0h4m2 0h1m7 0h1m1 0h1m1 0h4m2 0h4m1 0h2m3 0h1m2 0h1m6 0h2m1 0h1m1 0h2m1 0h3m8 0h2m1 0h2m13 0h3m2 0h1m6 0h1m1 0h2m12 0h1m2 0h1m3 0h4m7 0h2m3 0h1m2 0h2m4 0h1m1 0h1m1 0h1m13 0h3m21 0h2m7 0h2m9 0h2m3 0h1m2 0h2m5 0h2m2 0h1m1 0h5m6 0h1m5 0h1m1 0h2m4 0h1m1 0h1m1 0h1m2 0h2m13 0h4m10 0h3m3 0h2m8 0h3m2 0h1m5 0h3m2 0h1m12 0h2m2 0h2m11 0h1m6 0h2m4 0h2m4 0h1m1 0h1m5 0h2m1 0h1m9 0h5m1 0h1m4 0h3m2 0h1m5 0h1m8 0h1m10 0h2m16 0h2m3 0h2m13 0h2m1 0h1m2 0h1m7 0h1m6 0h1m1 0h1m3 0h2m2 0h3m6 0h3m5 0h3m4 0h2m3 0h2m12 0h1m5 0h1m8 0h1m6 0h2m1 0h1m3 0h1m8 0h1m4 0h1m2 0h5m3 0h1m11 0h2m4 0h1m6 0h2m2 0h2m5 0h1m4 0h1m5 0h1m1 0h2m1 0h4m1 0h2m5 0h3m1 0h4m2 0h1m2 0h2m6 0h4m7 0h1m1 0h7m10 0h1m2 0h1m12 0h3m3 0h1m12 0h1m11 0h1m3 0h1m8 0h4m1 0h1m17 0h3m3 0h5m2 0h1m4 0h1m3 0h2m4 0h3m12 0h1m5 0h2m6 0h1m14 0h1m1 0h1m2 0h4m2 0h3m2 0h1m4 0h1m5 0h1m2 0h2m7 0h2m2 0h2m1 0h1m9 0h1m2 0h1m1 0h1m13 0h5m2 0h1m6 0h1m1 0h1m-1106 1h1m47 0h1m23 0h1m42 0h1m34 0h1m125 0h1m17 0h1m37 0h1m9 0h1m33 0h2m44 0h1m12 0h1m47 0h1m20 0h1m191 0h1m22 0h1m8 0h1m40 0h1m24 0h1m14 0h1m2 0h1m2 0h1m6 0h1m6 0h1m1 0h1m8 0h1m7 0h1m13 0h1m61 0h1m39 0h1m51 0h1m56 0h1m22 0h1m-1107 24h1m65 0h1m124 0h1m9 0h2m70 0h1m12 0h1m1 0h1m22 0h1m25 0h1m112 0h1m110 0h1m89 0h1m1 0h1m15 0h1m55 0h2m79 0h1m94 0h1m18 0h1m2 0h1m5 0h1m154 0h1m-1092 1h2m1 0h1m3 0h1m33 0h3m1 0h1m2 0h1m3 0h3m1 0h2m1 0h2m1 0h3m8 0h6m5 0h1m1 0h3m6 0h1m3 0h4m7 0h3m6 0h2m7 0h1m4 0h2m10 0h4m7 0h7m20 0h2m1 0h2m1 0h1m6 0h1m1 0h1m2 0h6m1 0h2m6 0h4m7 0h1m8 0h1m14 0h1m1 0h1m7 0h1m1 0h1m1 0h1m9 0h1m4 0h1m7 0h1m1 0h4m1 0h2m6 0h2m9 0h1m2 0h3m1 0h2m5 0h1m1 0h2m10 0h4m13 0h2m3 0h1m6 0h2m6 0h1m2 0h3m4 0h1m2 0h1m1 0h1m4 0h1m1 0h4m6 0h1m4 0h3m4 0h2m20 0h1m7 0h5m3 0h1m4 0h2m4 0h1m1 0h2m12 0h1m17 0h1m20 0h1m6 0h1m2 0h1m1 0h1m2 0h7m18 0h3m2 0h1m7 0h3m8 0h1m1 0h1m2 0h2m6 0h1m20 0h3m2 0h1m14 0h1m12 0h3m5 0h1m1 0h2m6 0h4m15 0h2m2 0h3m1 0h3m11 0h9m3 0h5m5 0h2m1 0h2m3 0h1m20 0h1m10 0h1m8 0h1m1 0h2m8 0h1m2 0h1m7 0h3m5 0h1m13 0h1m3 0h2m9 0h1m23 0h3m9 0h1m10 0h1m6 0h1m1 0h2m2 0h1m18 0h1m2 0h1m5 0h1m1 0h1m2 0h2m3 0h1m6 0h1m2 0h1m2 0h2m3 0h2m9 0h2m9 0h2m1 0h1m4 0h3m6 0h4m7 0h2m3 0h1m3 0h1m2 0h2m4 0h2m3 0h1m2 0h1m12 0h1m3 0h2m3 0h2m11 0h1m9 0h5m1 0h1m7 0h4m4 0h6m-1112 4h1m4 0h2m3 0h2m1 0h1m1 0h1m4 0h4m9 0h1m6 0h1m7 0h1m4 0h1m3 0h3m3 0h2m1 0h3m11 0h1m3 0h1m10 0h1m4 0h1m12 0h3m8 0h2m7 0h1m4 0h1m6 0h4m1 0h2m1 0h1m4 0h1m4 0h1m1 0h5m7 0h1m4 0h1m10 0h3m4 0h2m2 0h3m6 0h1m8 0h1m2 0h1m5 0h4m3 0h1m1 0h4m1 0h2m6 0h3m1 0h3m1 0h1m1 0h2m3 0h1m8 0h3m6 0h1m9 0h2m2 0h3m1 0h3m8 0h8m1 0h2m1 0h4m5 0h2m4 0h2m2 0h6m3 0h2m2 0h5m1 0h2m1 0h2m3 0h1m2 0h2m2 0h5m1 0h5m10 0h1m1 0h1m1 0h2m3 0h3m2 0h1m1 0h1m13 0h2m1 0h3m1 0h2m4 0h2m1 0h1m12 0h7m5 0h2m5 0h6m2 0h1m6 0h4m5 0h1m7 0h1m4 0h5m2 0h1m5 0h1m1 0h2m4 0h1m2 0h1m5 0h3m4 0h2m2 0h4m2 0h1m12 0h1m2 0h1m5 0h1m5 0h4m10 0h1m3 0h5m1 0h3m1 0h1m1 0h1m3 0h3m2 0h4m2 0h1m4 0h1m10 0h2m2 0h2m1 0h1m2 0h1m2 0h1m8 0h1m9 0h2m1 0h3m12 0h2m1 0h4m3 0h1m2 0h2m3 0h1m4 0h1m3 0h6m13 0h3m14 0h1m2 0h4m9 0h2m2 0h2m2 0h1m14 0h2m11 0h1m7 0h1m1 0h1m5 0h1m5 0h1m1 0h1m7 0h1m4 0h2m14 0h1m3 0h2m5 0h3m6 0h2m5 0h2m1 0h2m5 0h1m11 0h1m4 0h5m5 0h3m3 0h7m1 0h1m4 0h3m2 0h2m1 0h2m7 0h1m5 0h1m2 0h1m2 0h1m3 0h2m1 0h1m2 0h3m6 0h1m3 0h2m10 0h1m3 0h1m1 0h1m3 0h1m1 0h4m8 0h3m7 0h2m13 0h1m2 0h1m2 0h1m2 0h2m4 0h5m3 0h2m8 0h1m11 0h4m1 0h3m-1119 1h1m14 0h1m152 0h1m56 0h1m12 0h1m20 0h1m3 0h1m52 0h1m60 0h1m4 0h1m6 0h2m19 0h1m20 0h1m3 0h1m45 0h1m37 0h1m9 0h1m2 0h1m43 0h1m8 0h1m102 0h1m14 0h1m2 0h1m9 0h1m14 0h1m107 0h1m108 0h1m5 0h1m74 0h1m21 0h1m66 0h1m-1081 24h1m122 0h1m1 0h1m3 0h1m8 0h1m37 0h2m110 0h1m25 0h1m20 0h1m10 0h1m127 0h1m12 0h1m96 0h1m18 0h1m2 0h1m45 0h1m59 0h1m56 0h1m68 0h1m12 0h1m83 0h1m2 0h1m63 0h2m20 0h1m11 0h1m17 0h1m23 0h1m-1116 1h1m4 0h1m8 0h5m3 0h1m14 0h3m2 0h3m15 0h3m11 0h1m1 0h2m15 0h3m7 0h1m11 0h2m3 0h3m2 0h3m1 0h1m8 0h1m7 0h3m1 0h1m4 0h1m1 0h1m2 0h4m2 0h1m5 0h1m2 0h1m5 0h1m9 0h1m3 0h1m1 0h1m11 0h1m3 0h2m14 0h1m2 0h1m5 0h1m5 0h1m1 0h1m1 0h1m1 0h1m11 0h1m5 0h1m2 0h1m6 0h4m3 0h1m10 0h4m10 0h3m3 0h1m7 0h4m3 0h1m2 0h1m11 0h3m2 0h1m3 0h1m1 0h2m12 0h2m1 0h1m1 0h4m2 0h2m2 0h1m3 0h3m3 0h2m3 0h1m8 0h1m7 0h1m11 0h10m3 0h3m4 0h1m2 0h1m6 0h1m13 0h2m1 0h5m5 0h1m5 0h2m1 0h1m3 0h2m4 0h3m2 0h2m11 0h1m4 0h2m7 0h4m6 0h1m5 0h1m4 0h2m4 0h1m19 0h2m25 0h2m1 0h4m1 0h7m3 0h1m8 0h2m2 0h1m7 0h2m11 0h3m7 0h2m2 0h1m1 0h1m8 0h1m1 0h1m1 0h3m2 0h1m6 0h1m23 0h2m9 0h2m6 0h2m20 0h1m18 0h2m3 0h1m7 0h2m2 0h1m2 0h2m7 0h4m7 0h1m13 0h2m11 0h3m14 0h3m10 0h6m6 0h3m2 0h1m2 0h1m4 0h2m1 0h3m2 0h2m2 0h1m3 0h3m11 0h2m1 0h2m9 0h1m1 0h1m10 0h1m3 0h4m3 0h2m1 0h4m22 0h1m14 0h2m3 0h4m6 0h3m2 0h1m3 0h4m6 0h1m3 0h1m2 0h1m8 0h3m1 0h5m4 0h1m4 0h2m3 0h1m18 0h1m-1117 4h3m2 0h1m8 0h1m1 0h1m5 0h2m1 0h1m1 0h1m2 0h2m17 0h3m6 0h1m1 0h1m7 0h1m3 0h2m5 0h4m3 0h2m2 0h1m5 0h5m5 0h1m2 0h2m1 0h1m5 0h1m1 0h2m3 0h1m4 0h1m6 0h3m4 0h2m3 0h4m2 0h2m2 0h2m3 0h3m6 0h3m13 0h1m3 0h2m1 0h1m1 0h5m10 0h2m8 0h1m5 0h1m2 0h1m6 0h1m5 0h2m8 0h1m6 0h1m11 0h5m1 0h2m3 0h3m6 0h2m2 0h3m1 0h2m11 0h1m1 0h4m2 0h4m1 0h1m4 0h1m1 0h1m2 0h3m11 0h1m1 0h4m13 0h2m2 0h2m1 0h1m5 0h1m9 0h1m1 0h1m13 0h2m3 0h5m3 0h1m2 0h2m4 0h4m7 0h1m4 0h1m2 0h1m4 0h1m7 0h1m1 0h1m1 0h1m10 0h3m1 0h4m1 0h2m4 0h5m1 0h1m1 0h1m3 0h1m3 0h2m4 0h1m1 0h1m4 0h1m6 0h2m2 0h2m5 0h2m7 0h1m1 0h3m8 0h1m18 0h1m1 0h4m4 0h1m7 0h1m2 0h2m4 0h1m3 0h1m1 0h5m1 0h2m6 0h5m2 0h1m2 0h2m3 0h2m1 0h1m9 0h1m4 0h1m3 0h3m3 0h1m6 0h4m4 0h1m3 0h1m2 0h2m4 0h2m6 0h3m8 0h8m4 0h1m6 0h1m3 0h1m5 0h2m2 0h1m5 0h1m10 0h2m1 0h1m2 0h2m3 0h3m4 0h2m3 0h3m8 0h1m10 0h2m3 0h1m2 0h1m4 0h3m13 0h3m8 0h3m2 0h1m7 0h1m1 0h1m8 0h4m1 0h1m6 0h4m6 0h2m14 0h1m8 0h2m1 0h1m6 0h4m4 0h7m12 0h2m3 0h1m1 0h2m13 0h1m1 0h1m3 0h6m2 0h2m5 0h3m1 0h1m3 0h1m1 0h1m14 0h2m7 0h1m1 0h1m2 0h4m1 0h1m1 0h1m3 0h1m5 0h2m3 0h1m11 0h1m14 0h1m11 0h1m4 0h2m4 0h1m1 0h2m1 0h2m-1107 1h1m13 0h1m67 0h1m7 0h1m30 0h1m7 0h1m5 0h1m44 0h1m3 0h1m80 0h1m94 0h1m120 0h2m55 0h1m32 0h1m12 0h1m29 0h1m50 0h1m26 0h1m17 0h1m49 0h1m3 0h1m46 0h1m1 0h1m50 0h2m9 0h1m9 0h1m145 0h1m68 0h1m-1022 24h1m77 0h1m6 0h1m17 0h1m24 0h1m47 0h2m111 0h1m1 0h1m29 0h1m72 0h1m131 0h1m6 0h1m74 0h1m156 0h1m34 0h2m20 0h1m90 0h1m97 0h1m-1090 1h1m32 0h1m6 0h2m16 0h2m3 0h3m12 0h1m9 0h1m5 0h2m2 0h3m4 0h1m3 0h4m19 0h2m21 0h4m4 0h2m2 0h1m7 0h3m3 0h1m22 0h5m1 0h2m4 0h8m12 0h5m3 0h4m5 0h3m1 0h1m1 0h4m9 0h1m3 0h2m15 0h3m11 0h2m23 0h1m13 0h1m16 0h5m1 0h1m6 0h3m2 0h2m6 0h1m3 0h1m5 0h2m24 0h2m13 0h1m21 0h4m6 0h2m4 0h1m7 0h1m11 0h2m46 0h1m1 0h1m10 0h1m18 0h1m3 0h1m21 0h2m5 0h1m10 0h2m7 0h2m6 0h1m14 0h4m12 0h1m8 0h2m1 0h2m2 0h1m5 0h1m39 0h2m8 0h3m1 0h2m17 0h1m4 0h1m1 0h3m4 0h3m8 0h3m31 0h3m16 0h1m18 0h2m5 0h4m5 0h3m19 0h2m39 0h1m17 0h1m29 0h3m5 0h1m21 0h3m9 0h1m16 0h1m5 0h4m31 0h5m5 0h2m-1117 5h1m2 0h2m6 0h1m1 0h1m2 0h1m6 0h5m4 0h2m9 0h3m4 0h3m17 0h3m14 0h4m6 0h3m17 0h1m4 0h1m1 0h1m4 0h2m1 0h1m13 0h1m8 0h1m5 0h1m3 0h1m7 0h5m33 0h2m13 0h1m13 0h2m17 0h2m3 0h1m5 0h7m7 0h2m14 0h2m4 0h6m10 0h1m10 0h1m29 0h1m5 0h1m10 0h9m5 0h1m1 0h1m11 0h1m6 0h6m1 0h1m4 0h2m2 0h3m12 0h1m5 0h2m3 0h2m9 0h1m5 0h3m7 0h3m22 0h2m1 0h1m8 0h2m4 0h1m11 0h2m11 0h2m1 0h1m2 0h1m1 0h3m2 0h2m2 0h1m1 0h1m10 0h2m5 0h1m2 0h3m32 0h2m16 0h2m14 0h1m14 0h3m16 0h3m21 0h6m1 0h2m4 0h2m9 0h3m2 0h4m1 0h1m5 0h5m20 0h1m6 0h2m4 0h2m2 0h4m3 0h1m2 0h3m6 0h5m7 0h2m2 0h4m3 0h1m11 0h2m1 0h9m9 0h2m1 0h2m18 0h3m9 0h1m8 0h1m1 0h2m9 0h2m11 0h2m10 0h1m2 0h2m6 0h1m8 0h1m7 0h5m2 0h3m12 0h1m6 0h1m1 0h1m1 0h5m2 0h1m4 0h1m3 0h1m5 0h1m6 0h2m17 0h5m3 0h3m28 0h1m7 0h1m-1092 1h1m21 0h1m5 0h1m20 0h1m73 0h1m26 0h1m2 0h1m203 0h1m35 0h1m29 0h1m38 0h1m35 0h2m32 0h1m9 0h1m3 0h1m127 0h1m46 0h2m13 0h1m2 0h1m29 0h1m19 0h1m24 0h1m18 0h1m9 0h1m34 0h1m93 0h1m73 0h1m44 0h1m-1103 24h1m1 0h1m233 0h1m44 0h1m17 0h1m86 0h1m35 0h1m74 0h1m5 0h1m37 0h1m18 0h1m3 0h1m112 0h1m46 0h1m23 0h1m12 0h1m50 0h1m101 0h2m40 0h1m46 0h1m5 0h1m25 0h1m-1044 1h1m3 0h1m1 0h5m3 0h2m10 0h2m23 0h1m3 0h1m4 0h1m6 0h1m11 0h1m1 0h1m3 0h1m7 0h2m11 0h1m1 0h2m1 0h1m4 0h1m5 0h1m6 0h1m3 0h1m2 0h2m1 0h1m16 0h2m3 0h1m5 0h1m8 0h1m2 0h1m1 0h1m9 0h2m3 0h2m5 0h2m9 0h2m26 0h5m6 0h1m3 0h1m31 0h1m13 0h8m2 0h4m11 0h1m1 0h4m1 0h2m1 0h2m16 0h1m10 0h1m3 0h1m2 0h3m2 0h1m9 0h2m3 0h1m24 0h2m1 0h2m2 0h2m2 0h1m6 0h1m1 0h1m1 0h2m15 0h1m6 0h3m14 0h3m1 0h2m13 0h1m2 0h4m2 0h4m5 0h2m2 0h1m7 0h1m8 0h1m2 0h8m1 0h2m1 0h4m8 0h3m1 0h3m5 0h3m13 0h1m4 0h1m15 0h1m1 0h1m8 0h1m9 0h1m22 0h1m3 0h1m13 0h1m6 0h3m4 0h3m1 0h1m7 0h1m2 0h2m17 0h1m1 0h1m1 0h4m3 0h1m10 0h2m1 0h6m9 0h1m1 0h2m25 0h3m11 0h1m4 0h1m5 0h2m1 0h2m7 0h1m1 0h2m1 0h1m20 0h1m14 0h1m1 0h2m4 0h1m3 0h1m4 0h1m9 0h2m19 0h3m4 0h1m1 0h1m6 0h4m1 0h1m5 0h1m12 0h1m2 0h1m11 0h8m26 0h2m4 0h2m1 0h1m8 0h1m3 0h1m10 0h3m4 0h1m5 0h1m-1062 4h5m3 0h1m5 0h1m2 0h1m8 0h2m13 0h1m3 0h2m2 0h1m1 0h3m4 0h5m6 0h2m18 0h3m2 0h1m3 0h1m1 0h1m7 0h1m11 0h1m9 0h2m3 0h2m3 0h1m5 0h2m1 0h2m1 0h2m3 0h2m1 0h1m2 0h1m5 0h2m7 0h2m19 0h1m3 0h1m3 0h3m19 0h1m21 0h1m1 0h1m1 0h1m1 0h1m2 0h2m6 0h3m3 0h4m1 0h2m1 0h1m2 0h2m2 0h2m2 0h3m1 0h2m1 0h1m9 0h2m1 0h2m1 0h1m2 0h1m4 0h1m9 0h1m3 0h5m5 0h2m2 0h1m3 0h1m2 0h2m1 0h1m2 0h4m1 0h2m2 0h1m2 0h1m4 0h1m1 0h1m3 0h2m1 0h3m8 0h2m1 0h2m5 0h1m1 0h1m3 0h4m1 0h2m3 0h4m13 0h3m9 0h2m2 0h1m1 0h2m7 0h1m3 0h2m6 0h2m3 0h1m5 0h1m1 0h1m1 0h2m3 0h5m6 0h1m2 0h2m1 0h1m11 0h3m1 0h2m1 0h2m2 0h1m1 0h1m1 0h2m1 0h3m10 0h2m2 0h1m1 0h1m11 0h5m6 0h5m1 0h1m2 0h3m12 0h1m4 0h1m3 0h1m11 0h1m4 0h5m2 0h3m4 0h1m7 0h2m1 0h2m6 0h1m10 0h2m4 0h5m10 0h2m7 0h2m3 0h9m2 0h1m1 0h5m2 0h2m4 0h1m15 0h2m9 0h2m8 0h11m3 0h1m7 0h1m5 0h1m2 0h1m5 0h3m2 0h1m2 0h1m3 0h1m1 0h2m2 0h1m3 0h2m5 0h2m2 0h2m7 0h5m3 0h1m5 0h2m3 0h1m1 0h1m1 0h1m4 0h5m3 0h1m1 0h3m5 0h3m6 0h1m1 0h1m9 0h4m1 0h2m8 0h5m5 0h1m7 0h1m1 0h1m3 0h2m10 0h1m3 0h1m5 0h1m7 0h2m9 0h3m5 0h1m13 0h1m6 0h3m1 0h2m7 0h4m3 0h5m-1007 1h1m93 0h1m7 0h1m42 0h1m86 0h1m22 0h1m28 0h1m39 0h1m48 0h1m31 0h1m12 0h1m30 0h1m38 0h1m6 0h1m32 0h1m56 0h2m2 0h1m39 0h1m6 0h1m42 0h1m54 0h1m20 0h1m54 0h1m68 0h1m9 0h1m34 0h1m70 0h1' stroke='#0ff' stroke-width='1' fill='none' shape-rendering='crispEdges'/>
<path d='M302.5 517v3M303.5 516v5M304.5 516v5M305.5 515v6M306.5 516v5M307.5 515v7M308.5 515v7M309.5 515v7M310.5 515v7M311.5 516v6M312.5 516v5M313.5 509v10M313.5 517v3M313.5 699v4M314.5 498v34M314.5 698v6M315.5 698v6M316.5 698v7M317.5 698v7M318.5 698v6M319.5 699v4M320.5 699v5M321.5 697v8M322.5 697v8M323.5 697v8M324.5 696v9M325.5 697v8M326.5 698v6M331.5 729v4M332.5 728v6M333.5 728v6M334.5 727v8M335.5 727v7M336.5 726v8M337.5 727v7M338.5 698v10M338.5 727v8M339.5 683v40M339.5 727v8M340.5 305v3M340.5 728v7M340.5 911v3M341.5 305v3M341.5 727v7M341.5 910v5M342.5 304v5M342.5 728v6M342.5 910v6M343.5 304v6M343.5 728v5M343.5 909v7M344.5 304v5M344.5 729v3M344.5 819v5M344.5 910v5M345.5 303v7M345.5 819v5M345.5 910v6M346.5 303v6M346.5 819v5M346.5 909v7M347.5 304v6M347.5 820v4M347.5 909v6M348.5 304v5M348.5 909v7M349.5 304v4M349.5 910v6M350.5 305v3M350.5 910v5M351.5 911v3M353.5 520v44M354.5 501v42M354.5 536v10M355.5 517v10M361.5 850v5M362.5 849v6M363.5 849v7M364.5 780v23M364.5 849v7M365.5 241v10M365.5 786v10M365.5 850v5M366.5 231v31M366.5 850v4M369.5 590v42M370.5 605v10M376.5 514v10M377.5 503v32M380.5 241v9M381.5 240v10M403.5 850v4M404.5 849v5M405.5 849v7M406.5 849v7M407.5 848v8M408.5 849v6M409.5 850v4M412.5 231v27M412.5 455v9M413.5 239v10M413.5 453v13M413.5 455v10M414.5 445v32M414.5 454v11M414.5 694v10M415.5 455v11M415.5 682v34M416.5 456v8M417.5 544v10M418.5 529v40M420.5 422v10M421.5 240v10M421.5 416v23M422.5 241v9M427.5 515v10M428.5 507v28M429.5 240v10M430.5 235v22M432.5 698v4M433.5 697v6M434.5 698v6M435.5 697v6M436.5 697v6M436.5 806v36M437.5 697v6M437.5 818v10M438.5 696v8M439.5 696v8M440.5 696v7M441.5 696v7M442.5 697v6M443.5 698v4M444.5 698v4M455.5 481v10M456.5 466v42M463.5 719v23M464.5 725v10M465.5 517v10M466.5 502v41M472.5 729v3M473.5 728v5M474.5 728v5M475.5 727v6M476.5 728v5M477.5 728v5M478.5 728v6M479.5 728v5M480.5 728v5M481.5 729v3M489.5 242v10M490.5 233v30M495.5 352v33M496.5 363v10M501.5 547v10M502.5 536v33M503.5 422v10M504.5 416v23M509.5 517v4M510.5 516v6M511.5 516v6M512.5 362v10M512.5 516v7M513.5 353v29M513.5 516v5M513.5 729v4M514.5 728v6M515.5 728v6M515.5 741v39M516.5 727v7M516.5 755v10M517.5 728v6M518.5 727v8M519.5 729v5M520.5 729v4M523.5 365v3M524.5 364v5M525.5 364v5M526.5 364v5M527.5 364v5M528.5 364v6M529.5 364v6M530.5 364v5M531.5 364v5M532.5 365v3M543.5 226v36M544.5 238v10M546.5 484v10M547.5 469v41M556.5 517v10M557.5 505v35M567.5 577v4M568.5 577v5M568.5 848v8M569.5 576v7M569.5 846v10M570.5 576v6M571.5 576v7M572.5 576v7M573.5 576v6M574.5 576v6M574.5 790v2M575.5 577v4M575.5 790v3M576.5 789v4M577.5 790v4M578.5 789v4M579.5 789v4M580.5 789v4M581.5 789v5M582.5 789v5M583.5 293v31M583.5 789v5M584.5 303v10M584.5 789v5M585.5 789v5M586.5 789v5M587.5 745v34M587.5 789v5M588.5 756v10M588.5 789v5M589.5 696v10M589.5 789v5M590.5 688v27M590.5 789v5M591.5 789v5M592.5 790v3M593.5 789v5M594.5 790v3M595.5 790v3M596.5 790v2M600.5 547v3M601.5 546v5M602.5 545v6M603.5 546v5M604.5 545v6M605.5 545v6M605.5 786v10M606.5 546v5M606.5 770v42M607.5 546v5M608.5 547v3M615.5 726v10M616.5 505v25M616.5 712v39M617.5 512v10M632.5 748v32M633.5 512v10M633.5 759v10M634.5 506v23M666.5 241v10M667.5 240v12M668.5 756v10M669.5 750v22M673.5 347v45M674.5 364v10M688.5 608v3M689.5 607v5M690.5 606v6M691.5 606v7M692.5 605v7M693.5 606v7M694.5 605v8M695.5 235v10M695.5 606v7M696.5 219v43M696.5 606v7M697.5 606v7M698.5 607v6M699.5 607v5M700.5 608v3M707.5 571v10M708.5 554v45M718.5 668v3M719.5 667v5M720.5 666v6M721.5 667v5M722.5 335v3M722.5 666v7M723.5 334v4M723.5 667v5M723.5 706v47M724.5 334v5M724.5 668v3M724.5 724v10M725.5 334v5M726.5 333v6M727.5 304v3M727.5 334v4M728.5 304v4M728.5 334v4M728.5 576v10M729.5 304v5M729.5 334v5M729.5 563v37M730.5 304v5M730.5 334v4M731.5 304v4M731.5 335v3M732.5 304v4M736.5 864v45M737.5 881v10M744.5 509v10M745.5 492v46M757.5 664v10M758.5 656v26M772.5 516v5M773.5 515v7M774.5 515v8M775.5 445v29M775.5 515v7M776.5 454v10M776.5 516v5M776.5 710v40M777.5 724v10M778.5 890v39M779.5 904v10M780.5 471v33M780.5 525v42M781.5 482v10M781.5 540v10M783.5 241v10M784.5 231v31M788.5 547v3M789.5 493v47M789.5 546v5M790.5 511v10M790.5 546v5M791.5 451v10M791.5 546v5M792.5 443v27M792.5 546v5M793.5 546v5M794.5 545v6M795.5 546v4M796.5 547v3M806.5 511v10M807.5 498v37M812.5 880v4M813.5 879v6M814.5 879v7M815.5 878v8M816.5 879v6M817.5 879v6M818.5 880v5M819.5 880v4M829.5 240v10M830.5 233v25M830.5 450v10M831.5 441v29M842.5 709v36M843.5 721v10M846.5 274v4M847.5 274v4M848.5 273v5M848.5 668v3M849.5 273v6M849.5 667v5M850.5 272v8M850.5 499v32M850.5 667v6M851.5 273v6M851.5 510v10M851.5 667v5M852.5 273v6M852.5 666v6M853.5 273v6M853.5 667v5M854.5 273v6M854.5 667v4M855.5 273v5M856.5 274v3M856.5 869v33M857.5 393v10M857.5 880v10M858.5 383v31M861.5 486v4M862.5 326v25M862.5 485v6M863.5 333v10M863.5 484v7M864.5 485v7M865.5 485v6M866.5 485v6M867.5 486v4M868.5 504v41M869.5 519v10M880.5 724v10M881.5 708v43M882.5 470v35M883.5 482v10M885.5 365v5M886.5 364v6M887.5 364v7M888.5 364v6M889.5 365v4M894.5 608v3M895.5 607v5M896.5 607v5M897.5 442v43M897.5 606v6M898.5 458v10M898.5 606v6M899.5 607v6M900.5 607v5M901.5 607v5M902.5 608v3M925.5 366v2M926.5 365v4M927.5 365v4M928.5 364v5M929.5 365v5M930.5 364v6M931.5 364v6M932.5 365v5M933.5 364v5M934.5 365v4M935.5 366v2M939.5 540v10M940.5 528v35M949.5 894v30M950.5 508v19M950.5 904v10M951.5 512v10M951.5 729v3M952.5 729v4M953.5 728v5M954.5 728v5M955.5 728v5M956.5 727v6M957.5 727v7M958.5 727v7M959.5 728v6M960.5 728v5M961.5 667v5M961.5 728v5M962.5 666v7M962.5 729v3M963.5 666v6M964.5 455v4M964.5 667v5M965.5 455v5M965.5 668v4M966.5 453v8M967.5 454v7M968.5 454v7M969.5 455v4M973.5 842v10M974.5 829v37M981.5 426v3M982.5 425v4M983.5 425v5M983.5 759v4M984.5 425v5M984.5 758v6M985.5 424v6M985.5 758v6M986.5 425v5M986.5 757v7M987.5 425v5M987.5 508v20M987.5 650v46M987.5 758v7M988.5 365v4M988.5 425v5M988.5 512v10M988.5 668v10M988.5 758v6M989.5 237v10M989.5 364v6M989.5 425v5M989.5 759v4M990.5 226v33M990.5 364v6M990.5 425v5M991.5 364v6M991.5 425v5M992.5 363v7M992.5 426v3M993.5 364v5M994.5 364v5M995.5 365v3M1015.5 619v36M1016.5 631v10M1017.5 675v39M1017.5 758v10M1018.5 689v10M1018.5 745v36M1019.5 748v29M1020.5 757v10M1022.5 665v10M1023.5 662v17M1037.5 800v40M1038.5 814v10M1042.5 516v5M1043.5 515v7M1044.5 514v9M1045.5 514v8M1046.5 514v8M1047.5 514v8M1048.5 513v10M1049.5 514v8M1050.5 514v9M1050.5 515v10M1051.5 505v31M1051.5 515v7M1052.5 515v6M1052.5 819v4M1053.5 516v5M1053.5 819v4M1054.5 818v6M1055.5 817v7M1056.5 817v7M1057.5 818v6M1058.5 818v6M1059.5 817v7M1060.5 818v7M1061.5 818v6M1062.5 818v6M1063.5 819v5M1064.5 819v3M1065.5 235v10M1066.5 220v40M1074.5 815v10M1075.5 796v49M1084.5 224v47M1084.5 534v28M1085.5 242v10M1085.5 542v10M1087.5 516v10M1088.5 505v33M1090.5 426v4M1091.5 425v5M1092.5 425v5M1093.5 425v6M1094.5 425v6M1095.5 243v3M1095.5 425v6M1096.5 243v4M1096.5 424v7M1096.5 691v24M1097.5 242v5M1097.5 425v6M1097.5 698v10M1098.5 242v5M1098.5 425v6M1099.5 242v6M1099.5 425v5M1100.5 241v7M1100.5 426v4M1101.5 242v6M1102.5 241v7M1103.5 242v6M1104.5 241v7M1105.5 242v5M1106.5 242v5M1107.5 243v3M1129.5 494v43M1129.5 722v10M1129.5 910v4M1130.5 510v10M1130.5 707v42M1130.5 909v6M1131.5 909v6M1132.5 683v31M1132.5 909v6M1133.5 693v10M1133.5 908v8M1134.5 909v7M1135.5 909v7M1136.5 908v7M1137.5 909v6M1138.5 909v6M1139.5 910v3M1148.5 638v3M1149.5 637v4M1149.5 697v10M1150.5 637v5M1150.5 682v41M1150.5 759v3M1151.5 636v6M1151.5 757v6M1152.5 637v5M1152.5 757v6M1153.5 636v6M1153.5 757v7M1154.5 637v6M1154.5 757v7M1155.5 636v7M1155.5 756v9M1156.5 637v6M1156.5 757v8M1157.5 636v6M1157.5 756v9M1158.5 637v5M1158.5 755v10M1159.5 638v3M1159.5 756v9M1159.5 874v10M1160.5 480v10M1160.5 668v4M1160.5 756v9M1160.5 863v33M1161.5 471v29M1161.5 667v5M1161.5 756v8M1162.5 666v7M1162.5 757v8M1163.5 666v7M1163.5 758v5M1164.5 666v7M1164.5 757v6M1165.5 667v6M1165.5 758v4M1166.5 495v39M1166.5 666v7M1167.5 509v10M1167.5 666v8M1168.5 666v7M1169.5 667v6M1170.5 668v4M1171.5 668v4M1174.5 812v10M1175.5 794v47M1176.5 423v10M1177.5 414v29M1178.5 595v35M1179.5 607v10M1182.5 517v10M1183.5 505v36M1189.5 365v4M1190.5 364v5M1191.5 364v5M1192.5 363v6M1193.5 364v6M1194.5 364v6M1195.5 364v5M1195.5 486v4M1196.5 365v4M1196.5 486v5M1197.5 485v6M1198.5 485v6M1199.5 485v6M1200.5 441v35M1200.5 485v7M1200.5 693v10M1201.5 453v10M1201.5 485v7M1201.5 681v34M1202.5 485v6M1203.5 485v6M1204.5 486v5M1205.5 486v4M1205.5 668v3M1206.5 667v5M1206.5 760v3M1207.5 667v5M1207.5 759v5M1208.5 666v7M1208.5 758v6M1209.5 667v6M1209.5 758v6M1210.5 667v5M1210.5 758v7M1211.5 668v3M1211.5 757v8M1212.5 515v6M1212.5 758v6M1213.5 396v3M1213.5 514v9M1213.5 757v8M1214.5 395v4M1214.5 513v10M1214.5 758v6M1215.5 395v5M1215.5 513v11M1215.5 759v5M1216.5 395v5M1216.5 513v12M1216.5 759v4M1217.5 394v6M1217.5 512v13M1218.5 394v6M1218.5 512v12M1219.5 394v6M1219.5 512v12M1220.5 199v35M1220.5 395v5M1220.5 512v12M1220.5 698v5M1221.5 211v10M1221.5 394v6M1221.5 514v9M1221.5 697v7M1222.5 395v5M1222.5 513v10M1222.5 697v7M1223.5 395v5M1223.5 515v7M1223.5 516v4M1223.5 697v7M1224.5 396v3M1224.5 515v6M1224.5 697v8M1225.5 396v3M1225.5 515v6M1225.5 696v9M1226.5 514v7M1226.5 697v7M1227.5 513v9M1227.5 697v7M1228.5 514v8M1228.5 698v4M1229.5 514v8M1230.5 513v9M1231.5 514v9M1232.5 513v10M1233.5 514v7M1233.5 532v31M1234.5 515v7M1234.5 542v10M1235.5 515v6M1236.5 516v5M1237.5 244v3M1237.5 516v4M1238.5 243v5M1239.5 243v5M1240.5 243v6M1241.5 243v6M1242.5 243v6M1243.5 242v7M1244.5 242v7M1245.5 242v7M1246.5 243v6M1247.5 243v5M1248.5 243v5M1248.5 475v27M1248.5 685v33M1249.5 244v3M1249.5 364v10M1249.5 483v10M1249.5 696v10M1250.5 355v28M1255.5 487v3M1256.5 486v5M1257.5 486v4M1258.5 486v5M1258.5 668v3M1259.5 485v6M1259.5 667v5M1260.5 485v7M1260.5 666v7M1261.5 485v6M1261.5 667v5M1262.5 486v5M1262.5 667v6M1263.5 486v4M1263.5 667v5M1264.5 486v4M1264.5 668v3M1265.5 487v3M1266.5 687v25M1267.5 694v10M1272.5 452v10M1273.5 445v26M1273.5 510v10M1274.5 500v31M1279.5 698v4M1280.5 697v6M1281.5 697v7M1282.5 696v7M1283.5 696v7M1284.5 697v6M1285.5 698v4M1293.5 517v3M1294.5 471v30M1294.5 517v4M1295.5 480v10M1295.5 516v5M1296.5 516v5M1297.5 515v6M1298.5 515v6M1299.5 515v6M1300.5 515v7M1301.5 515v6M1302.5 515v6M1303.5 515v7M1304.5 515v7M1305.5 516v5M1305.5 546v4M1306.5 515v7M1306.5 546v5M1307.5 515v7M1307.5 545v6M1308.5 515v6M1308.5 545v7M1308.5 662v10M1309.5 515v7M1309.5 544v8M1309.5 650v34M1310.5 515v7M1310.5 545v6M1311.5 516v5M1311.5 545v6M1312.5 477v25M1312.5 516v5M1312.5 545v6M1313.5 484v10M1313.5 516v4M1313.5 545v5M1314.5 517v3M1314.5 546v4M1315.5 517v3M1319.5 394v10M1320.5 385v28M1320.5 699v3M1321.5 698v5M1322.5 698v6M1323.5 698v6M1324.5 697v7M1325.5 697v8M1326.5 697v7M1326.5 909v10M1327.5 697v7M1327.5 898v33M1328.5 536v27M1328.5 696v9M1329.5 544v10M1329.5 697v7M1330.5 697v7M1331.5 697v7M1332.5 503v32M1332.5 698v5M1333.5 514v10M1333.5 698v5M1334.5 414v29M1334.5 699v3M1335.5 423v10M1339.5 864v35M1340.5 876v10M1340.5 911v3M1341.5 910v5M1342.5 910v6M1343.5 909v6M1344.5 880v4M1344.5 910v5M1345.5 667v4M1345.5 880v4M1345.5 911v3M1346.5 667v5M1346.5 685v29M1346.5 879v6M1347.5 666v7M1347.5 694v10M1347.5 879v6M1348.5 667v5M1348.5 879v6M1349.5 666v6M1349.5 878v8M1350.5 667v4M1350.5 878v8M1351.5 487v10M1351.5 879v6M1352.5 476v33M1352.5 878v7M1353.5 878v7M1354.5 878v8M1355.5 878v7M1356.5 244v3M1356.5 879v6M1357.5 244v4M1357.5 879v6M1358.5 243v6M1358.5 879v6M1359.5 243v6M1359.5 879v6M1360.5 243v6M1360.5 880v4M1361.5 242v7M1362.5 242v7M1363.5 242v8M1364.5 242v7M1365.5 242v7M1366.5 243v6M1367.5 243v6M1368.5 243v6M1369.5 243v6M1370.5 243v6M1371.5 243v5M1372.5 244v4M1373.5 244v4M1374.5 244v3M1377.5 365v3M1378.5 365v5M1379.5 364v6M1380.5 364v6M1381.5 364v6M1382.5 364v6M1383.5 363v8M1384.5 364v7M1385.5 364v6M1386.5 364v6M1387.5 365v5M1388.5 365v4M1389.5 365v3M1396.5 483v10M1397.5 465v46' stroke='#0ff' stroke-width='1' fill='none' shape-rendering='crispEdges'/>
</svg>
</body></html>
